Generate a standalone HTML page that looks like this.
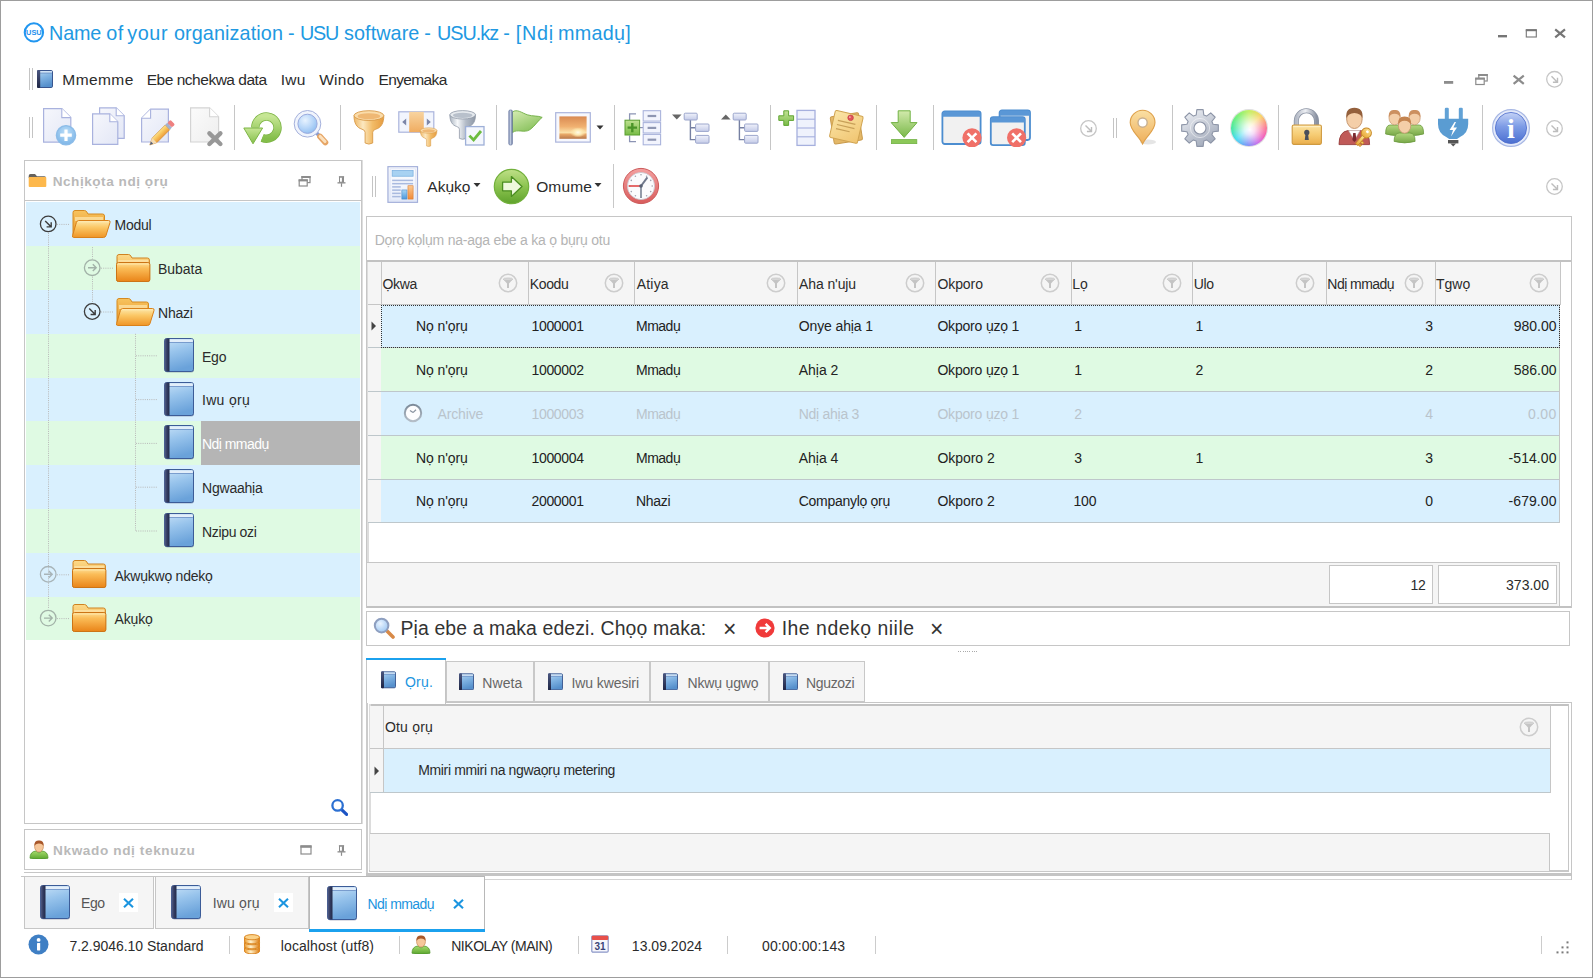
<!DOCTYPE html>
<html lang="ig"><head><meta charset="utf-8"><title>USU</title><style>
html,body{margin:0;padding:0;background:#fff}
body{width:1593px;height:978px;position:relative;overflow:hidden;font-family:"Liberation Sans",sans-serif}
div,svg{position:absolute;box-sizing:border-box}
.t{white-space:nowrap;line-height:1}
#win{left:0;top:0;width:1593px;height:978px;border:1px solid #9d9d9d}
</style></head><body>
<div id="win"></div>
<svg style="left:23px;top:21px" width="22" height="22" viewBox="0 0 22 22"><circle cx="10.9" cy="11.4" r="9.15" fill="#fff" stroke="#2196f0" stroke-width="2.1"/><text x="10.9" y="14.1" font-family="Liberation Sans,sans-serif" font-size="7.3" font-weight="bold" fill="#1e90ee" text-anchor="middle" textLength="15.6" lengthAdjust="spacingAndGlyphs">USU</text></svg>
<div class="t" style="left:0;top:24.24px;font-size:19.8px;color:#2199e2;"><span style="position:absolute;left:49.11px;top:0;letter-spacing:-0.235px">Name </span><span style="position:absolute;left:106.21px;top:0;letter-spacing:0.583px">of </span><span style="position:absolute;left:127.31px;top:0;letter-spacing:0.565px">your </span><span style="position:absolute;left:173.91px;top:0;letter-spacing:0.117px">organization </span><span style="position:absolute;left:288.01px;top:0;letter-spacing:1.184px">- </span><span style="position:absolute;left:300.11px;top:0;letter-spacing:-1.309px">USU </span><span style="position:absolute;left:344.01px;top:0;letter-spacing:0.081px">software </span><span style="position:absolute;left:424.31px;top:0;letter-spacing:1.184px">- </span><span style="position:absolute;left:437.01px;top:0;letter-spacing:-0.988px">USU.kz </span><span style="position:absolute;left:503.31px;top:0;letter-spacing:0.984px">- </span><span style="position:absolute;left:515.71px;top:0;letter-spacing:0.792px">[Ndị </span><span style="position:absolute;left:557.91px;top:0;letter-spacing:0.259px">mmadụ]</span></div>
<svg style="left:1494px;top:24px" width="76" height="18" viewBox="0 0 76 18"><rect x="4" y="11" width="9" height="2.4" fill="#767676"/><rect x="32.3" y="6" width="10" height="7" fill="none" stroke="#767676" stroke-width="1.1"/><rect x="31.8" y="5.2" width="11" height="2" fill="#767676"/><path d="M61.2 5.4 L71 13.4 M71 5.4 L61.2 13.4" stroke="#767676" stroke-width="2.2" fill="none"/></svg>
<svg style="left:28px;top:68px" width="8" height="22" viewBox="0 0 8 22"><rect x="1" y="0" width="1" height="22" fill="#c4c4c4"/><rect x="4" y="0" width="1" height="22" fill="#c4c4c4"/></svg>
<svg style="left:37px;top:70px" width="16" height="18" viewBox="0 0 16 18"><defs><linearGradient id="g1" x1="0" y1="0" x2="0.3" y2="1"><stop offset="0" stop-color="#b4d6f2"/><stop offset="0.5" stop-color="#7fb2e2"/><stop offset="1" stop-color="#5690cc"/></linearGradient><linearGradient id="g2" x1="0" y1="0" x2="0" y2="1"><stop offset="0" stop-color="#4a5680"/><stop offset="1" stop-color="#1e2544"/></linearGradient></defs><rect x="0.5" y="0.5" width="15" height="17" rx="1.3" fill="url(#g1)" stroke="#39558e" stroke-width="1"/><rect x="3" y="1.2" width="12" height="1.5" fill="#dbe9f8"/><rect x="3" y="2.7" width="12" height="0.8" fill="#6c8fc4"/><rect x="0" y="0" width="3.2" height="18" rx="1" fill="url(#g2)"/></svg>
<div class="t menu" style="left:62.35px;top:71.88px;font-size:15.5px;color:#2b2b2b;letter-spacing:0.419px;">Mmemme</div>
<div class="t menu" style="left:146.75px;top:71.88px;font-size:15.5px;color:#2b2b2b;letter-spacing:-0.483px;">Ebe nchekwa data</div>
<div class="t menu" style="left:280.65px;top:71.88px;font-size:15.5px;color:#2b2b2b;letter-spacing:0.295px;">Iwu</div>
<div class="t menu" style="left:319.25px;top:71.88px;font-size:15.5px;color:#2b2b2b;letter-spacing:0.234px;">Windo</div>
<div class="t menu" style="left:378.45px;top:71.88px;font-size:15.5px;color:#2b2b2b;letter-spacing:-0.616px;">Enyemaka</div>
<svg style="left:1440px;top:70px" width="125" height="20" viewBox="0 0 125 20"><rect x="4" y="11" width="9.2" height="2.8" fill="#8c8c8c"/><rect x="38.8" y="4.6" width="8.4" height="6.4" fill="none" stroke="#8c8c8c" stroke-width="1.2"/><rect x="38.2" y="4" width="9.6" height="2" fill="#8c8c8c"/><rect x="35.8" y="8.3" width="8.4" height="6.2" fill="#fff" stroke="#8c8c8c" stroke-width="1.2"/><rect x="35.2" y="7.7" width="9.6" height="2" fill="#8c8c8c"/><path d="M73.6 5.6 L83.8 13.8 M83.8 5.6 L73.6 13.8" stroke="#8c8c8c" stroke-width="2.2" fill="none"/><circle cx="114.5" cy="9.3" r="7.8" fill="none" stroke="#c6c6c6" stroke-width="1.3"/><path d="M111.5 6.300000000000001 L117.1 11.9 M117.5 7.700000000000001 L117.5 12.3 L112.9 12.3" stroke="#bdbdbd" stroke-width="1.4" fill="none"/></svg>
<svg style="left:28px;top:117px" width="8" height="21" viewBox="0 0 8 21"><rect x="1" y="0" width="1" height="21" fill="#c4c4c4"/><rect x="4" y="0" width="1" height="21" fill="#c4c4c4"/></svg>
<svg style="left:43px;top:108px" width="36" height="40" viewBox="0 0 36 40"><defs><linearGradient id="g4" x1="0" y1="0" x2="1" y2="1"><stop offset="0" stop-color="#f6f7fc"/><stop offset="1" stop-color="#e3e7f6"/></linearGradient></defs><path d="M0.6 0.6 H18.8 L27.8 9.6 V34.2 H0.6Z" fill="url(#g4)" stroke="#a9b2de" stroke-width="1.2"/><path d="M18.8 0.6 V9.6 H27.8" fill="#fff" stroke="#a9b2de" stroke-width="1.1"/><defs><radialGradient id="g3" cx="0.5" cy="0.35" r="0.7"><stop offset="0" stop-color="#bcdef8"/><stop offset="1" stop-color="#78b2e6"/></radialGradient></defs><circle cx="23" cy="27.2" r="9.6" fill="url(#g3)" stroke="#8cbce8" stroke-width="1.4"/><path d="M23 21.4 V33 M17.2 27.2 H28.8" stroke="#fff" stroke-width="3.2"/></svg>
<svg style="left:92px;top:107px" width="34" height="40" viewBox="0 0 34 40"><defs><linearGradient id="g5" x1="0" y1="0" x2="1" y2="1"><stop offset="0" stop-color="#f6f7fc"/><stop offset="1" stop-color="#e3e7f6"/></linearGradient></defs><path d="M7.6 0.8 H24.200000000000003 L32.2 8.8 V31.400000000000002 H7.6Z" fill="url(#g5)" stroke="#a9b2de" stroke-width="1.2"/><path d="M24.200000000000003 0.8 V8.8 H32.2" fill="#fff" stroke="#a9b2de" stroke-width="1.1"/><defs><linearGradient id="g6" x1="0" y1="0" x2="1" y2="1"><stop offset="0" stop-color="#f6f7fc"/><stop offset="1" stop-color="#e3e7f6"/></linearGradient></defs><path d="M0.6 6.8 H17.8 L25.8 14.8 V37.4 H0.6Z" fill="url(#g6)" stroke="#a9b2de" stroke-width="1.2"/><path d="M17.8 6.8 V14.8 H25.8" fill="#fff" stroke="#a9b2de" stroke-width="1.1"/></svg>
<svg style="left:141px;top:108px" width="36" height="40" viewBox="0 0 36 40"><defs><linearGradient id="g8" x1="0" y1="0" x2="1" y2="1"><stop offset="0" stop-color="#f6f7fc"/><stop offset="1" stop-color="#e3e7f6"/></linearGradient></defs><path d="M9.6 1.2 H27.400000000000002 V34.0 H0.6 V10.2Z" fill="url(#g8)" stroke="#a9b2de" stroke-width="1.2"/><path d="M9.6 1.2 V10.2 H0.6" fill="#fff" stroke="#a9b2de" stroke-width="1.1"/><defs><linearGradient id="g7" x1="0" y1="0" x2="0" y2="1"><stop offset="0" stop-color="#fce08a"/><stop offset="0.45" stop-color="#f8c45c"/><stop offset="1" stop-color="#ec9c3c"/></linearGradient></defs><g transform="translate(8.8,37) rotate(-45)"><path d="M0 0 L6.6 -3.3 H25 V3.3 H6.6Z" fill="url(#g7)" stroke="#d0903c" stroke-width=".6"/><path d="M6.6 -3.3 L0 0 L6.6 3.3Z" fill="#f4dcb4"/><path d="M0 0 L3.2 -1.6 V1.6Z" fill="#56607a"/><rect x="25" y="-3.3" width="3" height="6.6" fill="#a4b0cc"/><rect x="28" y="-3.3" width="4.4" height="6.6" rx="1.4" fill="#ee8080"/></g></svg>
<svg style="left:190px;top:107px" width="36" height="42" viewBox="0 0 36 42"><defs><linearGradient id="g9" x1="0" y1="0" x2="1" y2="1"><stop offset="0" stop-color="#fbfbfb"/><stop offset="1" stop-color="#eeeeee"/></linearGradient></defs><path d="M0.6 0.8 H19.6 L28.6 9.8 V35.0 H0.6Z" fill="url(#g9)" stroke="#d4d4d4" stroke-width="1.2"/><path d="M19.6 0.8 V9.8 H28.6" fill="#fff" stroke="#d4d4d4" stroke-width="1.1"/><path d="M19.4 26.4 L30.4 37 M30.4 26.4 L19.4 37" stroke="#989898" stroke-width="4.4" stroke-linecap="round"/></svg>
<svg style="left:243px;top:111px" width="40" height="36" viewBox="0 0 40 36"><defs><linearGradient id="g10" x1="0" y1="0" x2="0" y2="1"><stop offset="0" stop-color="#c6e694"/><stop offset="1" stop-color="#84be4a"/></linearGradient></defs><path d="M12.30 16.60 A11.1 11.1 0 1 1 19.24 26.89" fill="none" stroke="#7cb444" stroke-width="8.4"/><path d="M12.30 16.60 A11.1 11.1 0 1 1 19.24 26.89" fill="none" stroke="url(#g10)" stroke-width="6.8"/><path d="M0.8 17 H19.6 L10 32.8Z" fill="url(#g10)" stroke="#7cb444" stroke-width="1"/></svg>
<svg style="left:293px;top:108px" width="38" height="40" viewBox="0 0 38 40"><defs><radialGradient id="g11" cx="0.38" cy="0.32" r="0.8"><stop offset="0" stop-color="#e8f3ff"/><stop offset="0.55" stop-color="#b4d4f8"/><stop offset="1" stop-color="#86b8ee"/></radialGradient></defs><path d="M22.6 24 L27 28.6" stroke="#8c9ccc" stroke-width="3.6"/><path d="M27 28.6 L32.4 34.4" stroke="#e6a464" stroke-width="5.8" stroke-linecap="round"/><path d="M27.2 28.4 L32 33.6" stroke="#fbe0bc" stroke-width="3" stroke-linecap="round"/><circle cx="14.5" cy="15.8" r="13.3" fill="#f0f4fc" stroke="#a4b0dc" stroke-width="1"/><circle cx="14.5" cy="15.8" r="9.6" fill="url(#g11)" stroke="#9aaade" stroke-width="1"/></svg>
<svg style="left:353px;top:110px" width="34" height="36" viewBox="0 0 34 36"><defs><linearGradient id="g12" x1="0" y1="0" x2="1" y2="0"><stop offset="0" stop-color="#eeb664"/><stop offset="0.3" stop-color="#fce8c0"/><stop offset="0.62" stop-color="#f2bc68"/><stop offset="1" stop-color="#e69c40"/></linearGradient></defs><g transform="scale(1.0)"><path d="M1 5.5 C1 13 3.5 17.6 9 19.2 Q12.1 20 12.1 22.4 V33 Q15.9 35.2 19.7 33 V22.4 Q19.7 20 22.8 19.2 C28.3 17.6 30.8 13 30.8 5.5Z" fill="url(#g12)" stroke="#d89a48" stroke-width=".9"/><ellipse cx="15.9" cy="5.6" rx="14.9" ry="4.9" fill="#fadcaa" stroke="#d89a48" stroke-width=".9"/><ellipse cx="15.9" cy="6.2" rx="11.4" ry="3" fill="#eaa85c" opacity=".7"/></g></svg>
<svg style="left:397.8px;top:110.5px" width="44" height="36" viewBox="0 0 44 36"><defs><linearGradient id="g13" x1="0" y1="0" x2="0" y2="1"><stop offset="0" stop-color="#f8d4a0"/><stop offset="1" stop-color="#f0ac60"/></linearGradient></defs><rect x="0.8" y="0.8" width="35" height="20.4" fill="#f2f5fd" stroke="#aab4dc" stroke-width="1.2"/><rect x="11.2" y="0.8" width="14.6" height="20.4" fill="url(#g13)"/><path d="M8.2 7.4 V14.6 L4.2 11Z M28.8 7.4 V14.6 L32.8 11Z" fill="#7c86a8"/><g transform="translate(21.7,16.4)"><defs><linearGradient id="g14" x1="0" y1="0" x2="1" y2="0"><stop offset="0" stop-color="#eeb664"/><stop offset="0.3" stop-color="#fce8c0"/><stop offset="0.62" stop-color="#f2bc68"/><stop offset="1" stop-color="#e69c40"/></linearGradient></defs><g transform="scale(0.56)"><path d="M1 5.5 C1 13 3.5 17.6 9 19.2 Q12.1 20 12.1 22.4 V33 Q15.9 35.2 19.7 33 V22.4 Q19.7 20 22.8 19.2 C28.3 17.6 30.8 13 30.8 5.5Z" fill="url(#g14)" stroke="#d89a48" stroke-width=".9"/><ellipse cx="15.9" cy="5.6" rx="14.9" ry="4.9" fill="#fadcaa" stroke="#d89a48" stroke-width=".9"/><ellipse cx="15.9" cy="6.2" rx="11.4" ry="3" fill="#eaa85c" opacity=".7"/></g></g></svg>
<svg style="left:449px;top:110px" width="38" height="38" viewBox="0 0 38 38"><defs><linearGradient id="g15" x1="0" y1="0" x2="1" y2="0"><stop offset="0" stop-color="#aab4c0"/><stop offset="0.3" stop-color="#f6f8fa"/><stop offset="0.62" stop-color="#b4bcc8"/><stop offset="1" stop-color="#8e98a6"/></linearGradient></defs><g transform="scale(0.86)"><path d="M1 5.5 C1 13 3.5 17.6 9 19.2 Q12.1 20 12.1 22.4 V33 Q15.9 35.2 19.7 33 V22.4 Q19.7 20 22.8 19.2 C28.3 17.6 30.8 13 30.8 5.5Z" fill="url(#g15)" stroke="#8e98a6" stroke-width=".9"/><ellipse cx="15.9" cy="5.6" rx="14.9" ry="4.9" fill="#e6eaee" stroke="#8e98a6" stroke-width=".9"/><ellipse cx="15.9" cy="6.2" rx="11.4" ry="3" fill="#a4aebc" opacity=".7"/></g><rect x="16.6" y="16.6" width="18.4" height="18.4" fill="#f4f7fd" stroke="#9eb0d8" stroke-width="1.3"/><path d="M20.4 25.6 L24.6 30 L32 21" fill="none" stroke="#6cbc40" stroke-width="2.8"/></svg>
<svg style="left:507px;top:109px" width="38" height="38" viewBox="0 0 38 38"><defs><linearGradient id="g16" x1="0" y1="0" x2="0.6" y2="1"><stop offset="0" stop-color="#d6ecb2"/><stop offset="1" stop-color="#86c05a"/></linearGradient><linearGradient id="g17" x1="0" y1="0" x2="1" y2="0"><stop offset="0" stop-color="#8090b4"/><stop offset="0.45" stop-color="#c4cee2"/><stop offset="1" stop-color="#66769e"/></linearGradient></defs><path d="M5.4 3 C10 -0.4 15 4 20.4 5.8 C26 7.6 30.4 6.4 35.2 8.4 C31.4 11 28.4 16.6 23 20.6 C17 24.6 10.6 19.4 5.4 23.6Z" fill="url(#g16)" stroke="#6fae44" stroke-width=".9"/><rect x="1.8" y="1" width="3.6" height="35" rx="1.4" fill="url(#g17)" stroke="#6a7aa2" stroke-width=".7"/></svg>
<svg style="left:555px;top:112px" width="37" height="32" viewBox="0 0 37 32"><defs><linearGradient id="g18" x1="0" y1="0" x2="0" y2="1"><stop offset="0" stop-color="#d98a52"/><stop offset="0.45" stop-color="#f0b070"/><stop offset="0.72" stop-color="#fbe0a8"/><stop offset="0.8" stop-color="#e8a868"/><stop offset="1" stop-color="#b8784a"/></linearGradient><radialGradient id="g19" cx="0.5" cy="0.5" r="0.5"><stop offset="0" stop-color="#fffbe8"/><stop offset="0.5" stop-color="#fde8b0"/><stop offset="1" stop-color="#fde8b000"/></radialGradient></defs><rect x="0.7" y="0.7" width="34.6" height="29.4" fill="#f7f8fd" stroke="#aab4dc" stroke-width="1.2"/><rect x="4.4" y="4.4" width="27.2" height="22.4" fill="url(#g18)"/><ellipse cx="23" cy="20.4" rx="8" ry="5" fill="url(#g19)"/></svg>
<svg style="left:596px;top:125px" width="8" height="6" viewBox="0 0 8 6"><path d="M0.5 0.6 H7.5 L4 4.6Z" fill="#333"/></svg>
<svg style="left:624px;top:110px" width="39" height="37" viewBox="0 0 39 37"><defs><linearGradient id="g20" x1="0" y1="0" x2="0" y2="1"><stop offset="0" stop-color="#bee090"/><stop offset="1" stop-color="#78bc46"/></linearGradient></defs><path d="M12 3.8 H5.6 V10 M5.6 25.6 V31.6 H12" fill="none" stroke="#8c94b4" stroke-width="1.3"/><path d="M12 17.6 H19" fill="none" stroke="#8c94b4" stroke-width="1.2"/><rect x="1" y="10.2" width="14.6" height="14.8" fill="url(#g20)" stroke="#5a9e30" stroke-width="1"/><path d="M8.3 13 V22.2 M3.6 17.6 H13" stroke="#4a9428" stroke-width="2.4"/><rect x="19.2" y="0.7" width="17.4" height="10.4" fill="#f2f4fd" stroke="#aab4dc" stroke-width="1.1"/><rect x="23.6" y="4.9" width="8.6" height="2.2" fill="#8e96b2"/><rect x="19.2" y="12.6" width="17.4" height="10.4" fill="#f2f4fd" stroke="#aab4dc" stroke-width="1.1"/><rect x="23.6" y="16.8" width="8.6" height="2.2" fill="#8e96b2"/><rect x="19.2" y="24.4" width="17.4" height="10.4" fill="#f2f4fd" stroke="#aab4dc" stroke-width="1.1"/><rect x="23.6" y="28.599999999999998" width="8.6" height="2.2" fill="#8e96b2"/></svg>
<svg style="left:671px;top:112px" width="40" height="34" viewBox="0 0 40 34"><defs><linearGradient id="g21" x1="0" y1="0" x2="0" y2="1"><stop offset="0" stop-color="#f0f2fb"/><stop offset="1" stop-color="#c4cbe8"/></linearGradient></defs><path d="M1 2.6 H10.6 L5.8 7.6Z" fill="#666"/><path d="M19.4 8 V27.6 H25 M19.4 15.8 H25" fill="none" stroke="#7680a2" stroke-width="1.4"/><rect x="13.2" y="1.2" width="13" height="6.8" rx="1" fill="url(#g21)" stroke="#9ca6cc" stroke-width="1"/><rect x="24.6" y="12" width="13.4" height="7.4" rx="1" fill="url(#g21)" stroke="#9ca6cc" stroke-width="1"/><rect x="24.6" y="23.4" width="13.4" height="7.8" rx="1" fill="url(#g21)" stroke="#9ca6cc" stroke-width="1"/></svg>
<svg style="left:719.6px;top:112px" width="40" height="34" viewBox="0 0 40 34"><defs><linearGradient id="g22" x1="0" y1="0" x2="0" y2="1"><stop offset="0" stop-color="#f0f2fb"/><stop offset="1" stop-color="#c4cbe8"/></linearGradient></defs><path d="M1 7.6 H10.6 L5.8 2.6Z" fill="#666"/><path d="M19.4 8 V27.6 H25 M19.4 15.8 H25" fill="none" stroke="#7680a2" stroke-width="1.4"/><rect x="13.2" y="1.2" width="13" height="6.8" rx="1" fill="url(#g22)" stroke="#9ca6cc" stroke-width="1"/><rect x="24.6" y="12" width="13.4" height="7.4" rx="1" fill="url(#g22)" stroke="#9ca6cc" stroke-width="1"/><rect x="24.6" y="23.4" width="13.4" height="7.8" rx="1" fill="url(#g22)" stroke="#9ca6cc" stroke-width="1"/></svg>
<svg style="left:778px;top:109px" width="39" height="38" viewBox="0 0 39 38"><defs><linearGradient id="g23" x1="0" y1="0" x2="0" y2="1"><stop offset="0" stop-color="#c2e294"/><stop offset="1" stop-color="#7abc48"/></linearGradient></defs><path d="M5.8 1.8 H10.6 V6.8 H15.6 V11.4 H10.6 V16.4 H5.8 V11.4 H0.8 V6.8 H5.8Z" fill="url(#g23)" stroke="#62a634" stroke-width="1"/><rect x="19" y="1.4" width="18" height="35" fill="#eff2fc" stroke="#a6b0de" stroke-width="1.3"/><path d="M19 10.2 H37" stroke="#a6b0de" stroke-width="1.1"/><path d="M19 19 H37" stroke="#a6b0de" stroke-width="1.1"/><path d="M19 27.8 H37" stroke="#a6b0de" stroke-width="1.1"/></svg>
<svg style="left:828px;top:109px" width="38" height="37" viewBox="0 0 38 37"><defs><linearGradient id="g24" x1="0" y1="0" x2="1" y2="1"><stop offset="0" stop-color="#fbe6a8"/><stop offset="1" stop-color="#f0c470"/></linearGradient></defs><g transform="rotate(-9 18 19)"><rect x="4" y="5.6" width="28.6" height="27.6" rx="1.5" fill="#e4b868" stroke="#c89a4c" stroke-width="1"/></g><g transform="rotate(13 18 18)"><rect x="4" y="4" width="28.6" height="27.6" rx="1.5" fill="url(#g24)" stroke="#d0a452" stroke-width="1"/><path d="M8.6 13.4 H26.6 M8.6 17.6 H26.6 M8.6 21.8 H22.6" stroke="#c8a058" stroke-width="1.2"/></g><circle cx="22.6" cy="8.8" r="2.8" fill="#e2545a" stroke="#b83840" stroke-width=".6"/><circle cx="21.9" cy="8.1" r=".9" fill="#f8b4b4"/></svg>
<svg style="left:890px;top:110px" width="29" height="36" viewBox="0 0 29 36"><defs><linearGradient id="g25" x1="0" y1="0" x2="0" y2="1"><stop offset="0" stop-color="#d2eaac"/><stop offset="1" stop-color="#7ab84a"/></linearGradient></defs><path d="M8.2 0.8 H20.2 V12.6 H27 L14.2 27.4 L1.2 12.6 H8.2Z" fill="url(#g25)" stroke="#72b244" stroke-width="1"/><rect x="1.4" y="29.6" width="25.4" height="4" fill="#8cc858" stroke="#72b244" stroke-width=".8"/></svg>
<svg style="left:941px;top:108.5px" width="42" height="38" viewBox="0 0 42 38"><rect x="1.4" y="2.4" width="38.2" height="32.6" rx="2.4" fill="#f1f1f1" stroke="#4c8dd0" stroke-width="1.8"/><path d="M1.4 7.800000000000001 V4.8 Q1.4 2.4 3.8 2.4 H37.2 Q39.6 2.4 39.6 4.8 V7.800000000000001Z" fill="#5a97d6"/><circle cx="31" cy="28.8" r="9.6" fill="#f07068"/><path d="M26.6 24.4 L35.4 33.2 M35.4 24.4 L26.6 33.2" stroke="#fff" stroke-width="2.6"/></svg>
<svg style="left:989px;top:108.5px" width="43" height="38" viewBox="0 0 43 38"><rect x="10.6" y="1.4" width="30.4" height="29.6" rx="2.4" fill="#f1f1f1" stroke="#4c8dd0" stroke-width="1.8"/><path d="M10.6 6.800000000000001 V3.8 Q10.6 1.4 13.0 1.4 H38.6 Q41.0 1.4 41.0 3.8 V6.800000000000001Z" fill="#5a97d6"/><rect x="1.8" y="8.2" width="34" height="28" rx="2.4" fill="#f1f1f1" stroke="#4c8dd0" stroke-width="1.8"/><path d="M1.8 13.6 V10.6 Q1.8 8.2 4.2 8.2 H33.4 Q35.8 8.2 35.8 10.6 V13.6Z" fill="#5a97d6"/><circle cx="27.6" cy="28.8" r="9.6" fill="#f07068"/><path d="M23.200000000000003 24.4 L32.0 33.2 M32.0 24.4 L23.200000000000003 33.2" stroke="#fff" stroke-width="2.6"/></svg>
<svg style="left:1079px;top:118.5px" width="19" height="19" viewBox="0 0 19 19"><circle cx="9.5" cy="9.5" r="7.8" fill="none" stroke="#c6c6c6" stroke-width="1.3"/><path d="M6.5 6.5 L12.1 12.1 M12.5 7.9 L12.5 12.5 L7.9 12.5" stroke="#bdbdbd" stroke-width="1.4" fill="none"/></svg>
<svg style="left:1112px;top:118px" width="8" height="20" viewBox="0 0 8 20"><rect x="1" y="0" width="1" height="20" fill="#c4c4c4"/><rect x="4" y="0" width="1" height="20" fill="#c4c4c4"/></svg>
<svg style="left:1128px;top:109px" width="31" height="38" viewBox="0 0 31 38"><defs><linearGradient id="g26" x1="0" y1="0" x2="0" y2="1"><stop offset="0" stop-color="#fae0a4"/><stop offset="1" stop-color="#eeae5a"/></linearGradient></defs><ellipse cx="20" cy="33" rx="8" ry="2.4" fill="#000" opacity=".10"/><path d="M14.6 35 C11 27 2.2 22 2.2 13.6 A12.4 12.4 0 0 1 27 13.6 C27 22 18.2 27 14.6 35Z" fill="url(#g26)" stroke="#dea04a" stroke-width="1.1"/><circle cx="14.6" cy="13.6" r="4.6" fill="#fff" stroke="#c8b090" stroke-width="1.4"/></svg>
<svg style="left:1180px;top:107.6px" width="40" height="40" viewBox="0 0 40 40"><defs><linearGradient id="g27" x1="0" y1="0" x2="0.6" y2="1"><stop offset="0" stop-color="#f2f4f8"/><stop offset="1" stop-color="#a4acbc"/></linearGradient></defs><path d="M38.33 16.85 L38.33 23.15 L33.07 23.76 L31.90 26.58 L35.19 30.74 L30.74 35.19 L26.58 31.90 L23.76 33.07 L23.15 38.33 L16.85 38.33 L16.24 33.07 L13.42 31.90 L9.26 35.19 L4.81 30.74 L8.10 26.58 L6.93 23.76 L1.67 23.15 L1.67 16.85 L6.93 16.24 L8.10 13.42 L4.81 9.26 L9.26 4.81 L13.42 8.10 L16.24 6.93 L16.85 1.67 L23.15 1.67 L23.76 6.93 L26.58 8.10 L30.74 4.81 L35.19 9.26 L31.90 13.42 L33.07 16.24Z" fill="url(#g27)" stroke="#8e96a8" stroke-width="1.1" stroke-linejoin="round"/><circle cx="20" cy="20" r="6" fill="#fff" stroke="#8e96a8" stroke-width="1.1"/><circle cx="20" cy="20" r="9.6" fill="none" stroke="#fff" stroke-width="1" opacity=".5"/></svg>
<svg style="left:1491px;top:107.6px" width="40" height="40" viewBox="0 0 40 40"><defs><linearGradient id="g28" x1="0" y1="0" x2="0" y2="1"><stop offset="0" stop-color="#c4d2f6"/><stop offset="0.45" stop-color="#7e9ce6"/><stop offset="1" stop-color="#4a6ed0"/></linearGradient></defs><circle cx="20" cy="20" r="18.4" fill="#e4eafa" stroke="#a8b8e4" stroke-width="1.2"/><circle cx="20" cy="20" r="15.6" fill="url(#g28)" stroke="#4c6ccc" stroke-width=".8"/><text x="20" y="30" font-family="Liberation Serif,serif" font-size="28" font-weight="bold" fill="#fff" text-anchor="middle">i</text></svg>
<svg style="left:1290px;top:108px" width="34" height="39" viewBox="0 0 34 39"><defs><linearGradient id="g29" x1="0" y1="0" x2="0" y2="1"><stop offset="0" stop-color="#fbe2a0"/><stop offset="0.5" stop-color="#f6cc74"/><stop offset="1" stop-color="#eaae4c"/></linearGradient><linearGradient id="g30" x1="0" y1="0" x2="1" y2="0"><stop offset="0" stop-color="#b4bac6"/><stop offset="0.45" stop-color="#eef0f4"/><stop offset="1" stop-color="#8a92a2"/></linearGradient></defs><path d="M6.3 19 V12.8 A10.1 10.1 0 0 1 26.5 12.8 V19" fill="none" stroke="#8a92a2" stroke-width="5"/><path d="M6.3 19 V12.8 A10.1 10.1 0 0 1 26.5 12.8 V19" fill="none" stroke="url(#g30)" stroke-width="3.4"/><rect x="2.2" y="17" width="29.2" height="19.4" rx="1.6" fill="url(#g29)" stroke="#cf9a40" stroke-width="1.1"/><rect x="3.2" y="18" width="27.2" height="1.2" fill="#fff4d0" opacity=".7"/><circle cx="16.8" cy="24.4" r="2.6" fill="#4a4e5a"/><path d="M15.6 25 H18 L18.8 32 H14.8Z" fill="#4a4e5a"/></svg>
<svg style="left:1338px;top:106.5px" width="40" height="40" viewBox="0 0 40 40"><defs><linearGradient id="g31" x1="0" y1="0" x2="0" y2="1"><stop offset="0" stop-color="#fbe090"/><stop offset="1" stop-color="#e8a838"/></linearGradient></defs><path d="M1 37.6 Q1 24.6 10 23.6 H22.6 Q31.6 24.6 31.6 37.6Z" fill="#c05a58" stroke="#98403e" stroke-width=".9"/><path d="M10.6 23.6 L16.4 33 L22 23.6Z" fill="#fff" stroke="#c8c8c8" stroke-width=".6"/><path d="M15.2 26 H17.6 L18.4 33 L16.4 35 L14.4 33Z" fill="#7a2a30"/><g transform="translate(16.4,12) scale(1.25)"><ellipse cx="0" cy="0" rx="6.2" ry="7.6" fill="#f4cea8" stroke="#c89870" stroke-width=".8"/><path d="M-6.4 -0.6 Q-7.4 -9 0 -9 Q7.4 -9 6.4 -0.6 Q5 -4.6 0 -4.8 Q-5 -4.6 -6.4 -0.6Z" fill="#94603c"/></g><g transform="translate(28.4,26) rotate(40)"><circle cx="0" cy="0" r="5" fill="url(#g31)" stroke="#c88a28" stroke-width="1"/><circle cx="0" cy="-1.6" r="1.4" fill="#fff"/><path d="M-1.6 4.6 H1.6 V15 H-1.6Z M1.6 9 H4.4 V11 H1.6Z M1.6 12.4 H4 V14.4 H1.6Z" fill="url(#g31)" stroke="#c88a28" stroke-width=".8"/></g></svg>
<svg style="left:1385px;top:109.5px" width="40" height="36" viewBox="0 0 40 36"><defs><linearGradient id="g32" x1="0" y1="0" x2="0" y2="1"><stop offset="0" stop-color="#b4d880"/><stop offset="1" stop-color="#78a848"/></linearGradient></defs><path d="M0.5999999999999996 24 Q0.5999999999999996 15 5.1 15 H14.1 Q18.6 15 18.6 24 Q9.6 27 0.5999999999999996 24Z" fill="url(#g32)" stroke="#6c9a40" stroke-width=".8"/><g transform="translate(9.6,8) scale(0.9)"><ellipse cx="0" cy="0" rx="6.2" ry="7.6" fill="#f4cea8" stroke="#c89870" stroke-width=".8"/><path d="M-6.4 -0.6 Q-7.4 -9 0 -9 Q7.4 -9 6.4 -0.6 Q5 -4.6 0 -4.8 Q-5 -4.6 -6.4 -0.6Z" fill="#cc9060"/></g><path d="M20.6 24 Q20.6 15 25.1 15 H34.1 Q38.6 15 38.6 24 Q29.6 27 20.6 24Z" fill="url(#g32)" stroke="#6c9a40" stroke-width=".8"/><g transform="translate(29.6,8) scale(0.9)"><ellipse cx="0" cy="0" rx="6.2" ry="7.6" fill="#f4cea8" stroke="#c89870" stroke-width=".8"/><path d="M-6.4 -0.6 Q-7.4 -9 0 -9 Q7.4 -9 6.4 -0.6 Q5 -4.6 0 -4.8 Q-5 -4.6 -6.4 -0.6Z" fill="#cc9060"/></g><path d="M9.100000000000001 31.4 Q9.100000000000001 23 14.350000000000001 23 H24.85 Q30.1 23 30.1 31.4 Q19.6 34.4 9.100000000000001 31.4Z" fill="url(#g32)" stroke="#6c9a40" stroke-width=".8"/><g transform="translate(19.6,15.6) scale(1.0)"><ellipse cx="0" cy="0" rx="6.2" ry="7.6" fill="#f4cea8" stroke="#c89870" stroke-width=".8"/><path d="M-6.4 -0.6 Q-7.4 -9 0 -9 Q7.4 -9 6.4 -0.6 Q5 -4.6 0 -4.8 Q-5 -4.6 -6.4 -0.6Z" fill="#c48450"/></g></svg>
<svg style="left:1437px;top:107px" width="33" height="41" viewBox="0 0 33 41"><rect x="7.8" y="0.8" width="4" height="13" rx="1.2" fill="#62a2d6"/><rect x="21.8" y="0.8" width="4" height="13" rx="1.2" fill="#62a2d6"/><path d="M1 11.8 H31.2 V17 Q31.2 26 23 30 L20 32 H12.2 L9.2 30 Q1 26 1 17Z" fill="#5a9cd2"/><path d="M17.6 15 L12.6 23 H16 L14 29.6 L20 20.6 H16.4 L19 15Z" fill="#fff"/><rect x="11" y="33" width="10.4" height="3.4" fill="#555"/><path d="M13.4 36.4 H19 L16.2 39.6Z" fill="#555"/></svg>
<svg style="left:1545px;top:118.5px" width="19" height="19" viewBox="0 0 19 19"><circle cx="9.5" cy="9.5" r="7.8" fill="none" stroke="#c6c6c6" stroke-width="1.3"/><path d="M6.5 6.5 L12.1 12.1 M12.5 7.9 L12.5 12.5 L7.9 12.5" stroke="#bdbdbd" stroke-width="1.4" fill="none"/></svg>
<div style="left:234px;top:105px;width:1px;height:45px;background:#c6c6c6"></div>
<div style="left:340px;top:105px;width:1px;height:45px;background:#c6c6c6"></div>
<div style="left:496px;top:105px;width:1px;height:45px;background:#c6c6c6"></div>
<div style="left:614px;top:105px;width:1px;height:45px;background:#c6c6c6"></div>
<div style="left:770px;top:105px;width:1px;height:45px;background:#c6c6c6"></div>
<div style="left:876px;top:105px;width:1px;height:45px;background:#c6c6c6"></div>
<div style="left:933px;top:105px;width:1px;height:45px;background:#c6c6c6"></div>
<div style="left:1172px;top:105px;width:1px;height:45px;background:#c6c6c6"></div>
<div style="left:1278px;top:105px;width:1px;height:45px;background:#c6c6c6"></div>
<div style="left:1482px;top:105px;width:1px;height:45px;background:#c6c6c6"></div>
<div style="left:1231.4px;top:109.6px;width:36px;height:36px;border-radius:50%;background:radial-gradient(circle at 52% 54%,#fff 0%,rgba(255,255,255,.8) 20%,rgba(255,255,255,0) 66%),conic-gradient(from 0deg,#c4f068,#f8d468 45deg,#fa6c8c 90deg,#f04cb0 120deg,#c05ce8 150deg,#6c84f6 185deg,#3cd8f0 228deg,#48e8a0 270deg,#7cf07c 315deg,#c4f068 360deg);box-shadow:0 0 0 1px rgba(160,160,160,.35)"></div>
<div style="left:24px;top:160px;width:338px;height:664px;border:1px solid #c6c6c6;background:#fff"></div>
<div style="left:25px;top:200px;width:336px;height:1px;background:#c6c6c6"></div>
<div style="left:362px;top:160px;width:1px;height:664px;background:#dedede"></div>
<svg style="left:28px;top:173px" width="19" height="15" viewBox="0 0 19 15"><path d="M0.7 3 Q0.7 1 2.5 1 H7 L9 3.2 H16.5 Q18 3.2 18 4.7 V5 H0.7Z" fill="#66625c"/><rect x="0.7" y="4" width="17.6" height="10" rx="1" fill="#fdb84c"/></svg>
<div class="t" style="left:52.65px;top:175.29px;font-size:13.6px;color:#b9b9b9;letter-spacing:0.525px;font-weight:bold">Nchịkọta ndị ọrụ</div>
<svg style="left:298px;top:174px" width="50" height="14" viewBox="0 0 50 14"><rect x="4" y="2.6" width="8" height="6" fill="none" stroke="#8c8c8c" stroke-width="1.2"/><rect x="3.4" y="2" width="9.2" height="2" fill="#8c8c8c"/><rect x="1.2" y="6" width="8" height="6" fill="#fff" stroke="#8c8c8c" stroke-width="1.2"/><rect x="0.6" y="5.4" width="9.2" height="2" fill="#8c8c8c"/><g transform="translate(39.5,2.2)"><rect x="1.4" y="0" width="5.2" height="1.2" fill="#8c8c8c"/><rect x="2" y="1" width="4" height="5" fill="#fff" stroke="#8c8c8c" stroke-width="1"/><rect x="4.4" y="1" width="1.6" height="5" fill="#8c8c8c"/><rect x="0" y="6" width="8" height="1.3" fill="#8c8c8c"/><rect x="3.4" y="7" width="1.2" height="3.6" fill="#8c8c8c"/></g></svg>
<div style="left:26px;top:202px;width:334px;height:44px;background:#d9f0fe"></div>
<svg style="left:71px;top:209px" width="40" height="30" viewBox="0 0 40 30"><defs><linearGradient id="g33" x1="0" y1="0" x2="0" y2="1"><stop offset="0" stop-color="#fde9ae"/><stop offset="0.4" stop-color="#fbc866"/><stop offset="1" stop-color="#ef9526"/></linearGradient><linearGradient id="g34" x1="0" y1="0" x2="0" y2="1"><stop offset="0" stop-color="#f7c35e"/><stop offset="1" stop-color="#e8952a"/></linearGradient></defs><path d="M2 27.5 V3.5 Q2 1.5 4 1.5 H13.5 Q15 1.5 15.8 3 L17 5 H31.5 Q33.5 5 33.5 7 V27.5Z" fill="url(#g34)" stroke="#d58a20" stroke-width="1"/><path d="M4 8 H32 V12 H4Z" fill="#fde8b0" opacity=".7"/><path d="M7.5 11.5 H37.5 Q39.6 11.5 39 13.5 L35 26.5 Q34.4 28.5 32.4 28.5 H2.6 Q1 28.5 1.6 26.5 L5.4 13.5 Q6 11.5 7.5 11.5Z" fill="url(#g33)" stroke="#d9811a" stroke-width="1"/><path d="M7.8 12.8 H37.6" stroke="#fff0c0" stroke-width="1" opacity=".6"/></svg>
<div class="t" style="left:114.53px;top:218.15px;font-size:14px;color:#2b2b2b;letter-spacing:-0.239px;">Modul</div>
<div style="left:26px;top:246px;width:334px;height:44px;background:#dffae3"></div>
<svg style="left:115px;top:253px" width="40" height="30" viewBox="0 0 40 30"><defs><linearGradient id="g35" x1="0" y1="0" x2="0" y2="1"><stop offset="0" stop-color="#fddf98"/><stop offset="0.3" stop-color="#fbbd58"/><stop offset="1" stop-color="#e98418"/></linearGradient><linearGradient id="g36" x1="0" y1="0" x2="0" y2="1"><stop offset="0" stop-color="#fcd988"/><stop offset="1" stop-color="#f2a63c"/></linearGradient></defs><path d="M2 28 V3.5 Q2 1.5 4 1.5 H13.5 Q15 1.5 15.8 3 L17 5 H32.4 Q34.4 5 34.4 7 V28Z" fill="url(#g36)" stroke="#cf8220" stroke-width="1"/><rect x="3.2" y="7" width="30" height="3" fill="#fde6ae" opacity=".7"/><rect x="1.5" y="9.5" width="33.4" height="19" rx="2" fill="url(#g35)" stroke="#cc7416" stroke-width="1"/><rect x="2.5" y="10.5" width="31.4" height="1.2" fill="#fff0b8" opacity=".5"/></svg>
<div class="t" style="left:158.03px;top:261.95px;font-size:14px;color:#2b2b2b;letter-spacing:-0.022px;">Bubata</div>
<div style="left:26px;top:290px;width:334px;height:44px;background:#d9f0fe"></div>
<svg style="left:115px;top:297px" width="40" height="30" viewBox="0 0 40 30"><defs><linearGradient id="g37" x1="0" y1="0" x2="0" y2="1"><stop offset="0" stop-color="#fde9ae"/><stop offset="0.4" stop-color="#fbc866"/><stop offset="1" stop-color="#ef9526"/></linearGradient><linearGradient id="g38" x1="0" y1="0" x2="0" y2="1"><stop offset="0" stop-color="#f7c35e"/><stop offset="1" stop-color="#e8952a"/></linearGradient></defs><path d="M2 27.5 V3.5 Q2 1.5 4 1.5 H13.5 Q15 1.5 15.8 3 L17 5 H31.5 Q33.5 5 33.5 7 V27.5Z" fill="url(#g38)" stroke="#d58a20" stroke-width="1"/><path d="M4 8 H32 V12 H4Z" fill="#fde8b0" opacity=".7"/><path d="M7.5 11.5 H37.5 Q39.6 11.5 39 13.5 L35 26.5 Q34.4 28.5 32.4 28.5 H2.6 Q1 28.5 1.6 26.5 L5.4 13.5 Q6 11.5 7.5 11.5Z" fill="url(#g37)" stroke="#d9811a" stroke-width="1"/><path d="M7.8 12.8 H37.6" stroke="#fff0c0" stroke-width="1" opacity=".6"/></svg>
<div class="t" style="left:158.03px;top:305.75px;font-size:14px;color:#2b2b2b;letter-spacing:-0.231px;">Nhazi</div>
<div style="left:26px;top:334px;width:334px;height:44px;background:#dffae3"></div>
<svg style="left:163.6px;top:338px" width="32" height="36" viewBox="0 0 32 36"><defs><linearGradient id="g39" x1="0" y1="0" x2="0.25" y2="1"><stop offset="0" stop-color="#c8e2f8"/><stop offset="0.45" stop-color="#98c4ec"/><stop offset="1" stop-color="#6aa2da"/></linearGradient><linearGradient id="g40" x1="0" y1="0" x2="1" y2="0"><stop offset="0" stop-color="#56618a"/><stop offset="0.5" stop-color="#333c62"/><stop offset="1" stop-color="#232a48"/></linearGradient></defs><rect x="1" y="1.5" width="29" height="33" rx="2.5" fill="#33406a" opacity=".35"/><rect x="0.5" y="0.5" width="29" height="33" rx="2.2" fill="url(#g39)" stroke="#3c5c98" stroke-width="1"/><rect x="4" y="1.4" width="24.8" height="2.6" fill="#e8f1fb" opacity=".9"/><rect x="4" y="4" width="24.8" height="1" fill="#6c8fc4" opacity=".8"/><path d="M0.5 2.5 Q0.5 0.5 2.5 0.5 H5.5 V33.5 H2.5 Q0.5 33.5 0.5 31.5Z" fill="url(#g40)"/></svg>
<div class="t" style="left:202.03px;top:349.55px;font-size:14px;color:#2b2b2b;letter-spacing:-0.257px;">Ego</div>
<div style="left:26px;top:378px;width:334px;height:43px;background:#d9f0fe"></div>
<svg style="left:163.6px;top:382px" width="32" height="36" viewBox="0 0 32 36"><defs><linearGradient id="g41" x1="0" y1="0" x2="0.25" y2="1"><stop offset="0" stop-color="#c8e2f8"/><stop offset="0.45" stop-color="#98c4ec"/><stop offset="1" stop-color="#6aa2da"/></linearGradient><linearGradient id="g42" x1="0" y1="0" x2="1" y2="0"><stop offset="0" stop-color="#56618a"/><stop offset="0.5" stop-color="#333c62"/><stop offset="1" stop-color="#232a48"/></linearGradient></defs><rect x="1" y="1.5" width="29" height="33" rx="2.5" fill="#33406a" opacity=".35"/><rect x="0.5" y="0.5" width="29" height="33" rx="2.2" fill="url(#g41)" stroke="#3c5c98" stroke-width="1"/><rect x="4" y="1.4" width="24.8" height="2.6" fill="#e8f1fb" opacity=".9"/><rect x="4" y="4" width="24.8" height="1" fill="#6c8fc4" opacity=".8"/><path d="M0.5 2.5 Q0.5 0.5 2.5 0.5 H5.5 V33.5 H2.5 Q0.5 33.5 0.5 31.5Z" fill="url(#g42)"/></svg>
<div class="t" style="left:202.03px;top:393.35px;font-size:14px;color:#2b2b2b;letter-spacing:0.304px;">Iwu ọrụ</div>
<div style="left:26px;top:421px;width:334px;height:44px;background:#dffae3"></div>
<svg style="left:163.6px;top:425px" width="32" height="36" viewBox="0 0 32 36"><defs><linearGradient id="g43" x1="0" y1="0" x2="0.25" y2="1"><stop offset="0" stop-color="#c8e2f8"/><stop offset="0.45" stop-color="#98c4ec"/><stop offset="1" stop-color="#6aa2da"/></linearGradient><linearGradient id="g44" x1="0" y1="0" x2="1" y2="0"><stop offset="0" stop-color="#56618a"/><stop offset="0.5" stop-color="#333c62"/><stop offset="1" stop-color="#232a48"/></linearGradient></defs><rect x="1" y="1.5" width="29" height="33" rx="2.5" fill="#33406a" opacity=".35"/><rect x="0.5" y="0.5" width="29" height="33" rx="2.2" fill="url(#g43)" stroke="#3c5c98" stroke-width="1"/><rect x="4" y="1.4" width="24.8" height="2.6" fill="#e8f1fb" opacity=".9"/><rect x="4" y="4" width="24.8" height="1" fill="#6c8fc4" opacity=".8"/><path d="M0.5 2.5 Q0.5 0.5 2.5 0.5 H5.5 V33.5 H2.5 Q0.5 33.5 0.5 31.5Z" fill="url(#g44)"/></svg>
<div style="left:201px;top:421px;width:159px;height:44px;background:#b5b5b5"></div>
<div class="t" style="left:202.03px;top:437.15px;font-size:14px;color:#fff;letter-spacing:-0.549px;">Ndị mmadụ</div>
<div style="left:26px;top:465px;width:334px;height:44px;background:#d9f0fe"></div>
<svg style="left:163.6px;top:469px" width="32" height="36" viewBox="0 0 32 36"><defs><linearGradient id="g45" x1="0" y1="0" x2="0.25" y2="1"><stop offset="0" stop-color="#c8e2f8"/><stop offset="0.45" stop-color="#98c4ec"/><stop offset="1" stop-color="#6aa2da"/></linearGradient><linearGradient id="g46" x1="0" y1="0" x2="1" y2="0"><stop offset="0" stop-color="#56618a"/><stop offset="0.5" stop-color="#333c62"/><stop offset="1" stop-color="#232a48"/></linearGradient></defs><rect x="1" y="1.5" width="29" height="33" rx="2.5" fill="#33406a" opacity=".35"/><rect x="0.5" y="0.5" width="29" height="33" rx="2.2" fill="url(#g45)" stroke="#3c5c98" stroke-width="1"/><rect x="4" y="1.4" width="24.8" height="2.6" fill="#e8f1fb" opacity=".9"/><rect x="4" y="4" width="24.8" height="1" fill="#6c8fc4" opacity=".8"/><path d="M0.5 2.5 Q0.5 0.5 2.5 0.5 H5.5 V33.5 H2.5 Q0.5 33.5 0.5 31.5Z" fill="url(#g46)"/></svg>
<div class="t" style="left:202.03px;top:480.95px;font-size:14px;color:#2b2b2b;letter-spacing:-0.215px;">Ngwaahịa</div>
<div style="left:26px;top:509px;width:334px;height:44px;background:#dffae3"></div>
<svg style="left:163.6px;top:513px" width="32" height="36" viewBox="0 0 32 36"><defs><linearGradient id="g47" x1="0" y1="0" x2="0.25" y2="1"><stop offset="0" stop-color="#c8e2f8"/><stop offset="0.45" stop-color="#98c4ec"/><stop offset="1" stop-color="#6aa2da"/></linearGradient><linearGradient id="g48" x1="0" y1="0" x2="1" y2="0"><stop offset="0" stop-color="#56618a"/><stop offset="0.5" stop-color="#333c62"/><stop offset="1" stop-color="#232a48"/></linearGradient></defs><rect x="1" y="1.5" width="29" height="33" rx="2.5" fill="#33406a" opacity=".35"/><rect x="0.5" y="0.5" width="29" height="33" rx="2.2" fill="url(#g47)" stroke="#3c5c98" stroke-width="1"/><rect x="4" y="1.4" width="24.8" height="2.6" fill="#e8f1fb" opacity=".9"/><rect x="4" y="4" width="24.8" height="1" fill="#6c8fc4" opacity=".8"/><path d="M0.5 2.5 Q0.5 0.5 2.5 0.5 H5.5 V33.5 H2.5 Q0.5 33.5 0.5 31.5Z" fill="url(#g48)"/></svg>
<div class="t" style="left:202.03px;top:524.75px;font-size:14px;color:#2b2b2b;letter-spacing:-0.349px;">Nzipu ozi</div>
<div style="left:26px;top:553px;width:334px;height:44px;background:#d9f0fe"></div>
<svg style="left:71px;top:559px" width="40" height="30" viewBox="0 0 40 30"><defs><linearGradient id="g49" x1="0" y1="0" x2="0" y2="1"><stop offset="0" stop-color="#fddf98"/><stop offset="0.3" stop-color="#fbbd58"/><stop offset="1" stop-color="#e98418"/></linearGradient><linearGradient id="g50" x1="0" y1="0" x2="0" y2="1"><stop offset="0" stop-color="#fcd988"/><stop offset="1" stop-color="#f2a63c"/></linearGradient></defs><path d="M2 28 V3.5 Q2 1.5 4 1.5 H13.5 Q15 1.5 15.8 3 L17 5 H32.4 Q34.4 5 34.4 7 V28Z" fill="url(#g50)" stroke="#cf8220" stroke-width="1"/><rect x="3.2" y="7" width="30" height="3" fill="#fde6ae" opacity=".7"/><rect x="1.5" y="9.5" width="33.4" height="19" rx="2" fill="url(#g49)" stroke="#cc7416" stroke-width="1"/><rect x="2.5" y="10.5" width="31.4" height="1.2" fill="#fff0b8" opacity=".5"/></svg>
<div class="t" style="left:114.53px;top:568.55px;font-size:14px;color:#2b2b2b;letter-spacing:-0.241px;">Akwụkwọ ndekọ</div>
<div style="left:26px;top:597px;width:334px;height:43px;background:#dffae3"></div>
<svg style="left:71px;top:603px" width="40" height="30" viewBox="0 0 40 30"><defs><linearGradient id="g51" x1="0" y1="0" x2="0" y2="1"><stop offset="0" stop-color="#fddf98"/><stop offset="0.3" stop-color="#fbbd58"/><stop offset="1" stop-color="#e98418"/></linearGradient><linearGradient id="g52" x1="0" y1="0" x2="0" y2="1"><stop offset="0" stop-color="#fcd988"/><stop offset="1" stop-color="#f2a63c"/></linearGradient></defs><path d="M2 28 V3.5 Q2 1.5 4 1.5 H13.5 Q15 1.5 15.8 3 L17 5 H32.4 Q34.4 5 34.4 7 V28Z" fill="url(#g52)" stroke="#cf8220" stroke-width="1"/><rect x="3.2" y="7" width="30" height="3" fill="#fde6ae" opacity=".7"/><rect x="1.5" y="9.5" width="33.4" height="19" rx="2" fill="url(#g51)" stroke="#cc7416" stroke-width="1"/><rect x="2.5" y="10.5" width="31.4" height="1.2" fill="#fff0b8" opacity=".5"/></svg>
<div class="t" style="left:114.53px;top:612.35px;font-size:14px;color:#2b2b2b;letter-spacing:-0.134px;">Akụkọ</div>
<svg style="left:0;top:0" width="400" height="700" viewBox="0 0 400 700"><g stroke="#b8b8b8" stroke-width="1" stroke-dasharray="1 1.2" fill="none"><path d="M48.5 232.9 V609.1"/><path d="M57 224.4 H70"/><path d="M57 574.8 H70"/><path d="M57 618.6 H70"/><path d="M92.5 247.2 V258.7 M92.5 276.7 V302.5"/><path d="M101 268.2 H113"/><path d="M101 312.0 H113"/><path d="M135.5 333.79999999999995 V530.5"/><path d="M136 355.79999999999995 H158"/><path d="M136 399.6 H158"/><path d="M136 443.4 H158"/><path d="M136 487.19999999999993 H158"/><path d="M136 531.0 H158"/></g><circle cx="48.2" cy="223.9" r="7.8" fill="none" stroke="#3c3c3c" stroke-width="1.3"/><path d="M45.2 220.9 L50.800000000000004 226.5 M51.2 222.3 L51.2 226.9 L46.6 226.9" stroke="#3c3c3c" stroke-width="1.4" fill="none"/><circle cx="92.2" cy="311.5" r="7.8" fill="none" stroke="#3c3c3c" stroke-width="1.3"/><path d="M89.2 308.5 L94.8 314.1 M95.2 309.9 L95.2 314.5 L90.60000000000001 314.5" stroke="#3c3c3c" stroke-width="1.4" fill="none"/><circle cx="92.2" cy="267.7" r="7.8" fill="none" stroke="#a2b2a8" stroke-width="1.3"/><path d="M88.0 267.7 L95.8 267.7 M92.8 264.3 L96.2 267.7 L92.8 271.09999999999997" stroke="#a2b2a8" stroke-width="1.4" fill="none"/><circle cx="48.2" cy="574.3" r="7.8" fill="none" stroke="#a8b4b8" stroke-width="1.3"/><path d="M44.0 574.3 L51.800000000000004 574.3 M48.800000000000004 570.9 L52.2 574.3 L48.800000000000004 577.6999999999999" stroke="#a8b4b8" stroke-width="1.4" fill="none"/><circle cx="48.2" cy="618.1" r="7.8" fill="none" stroke="#a2b2a8" stroke-width="1.3"/><path d="M44.0 618.1 L51.800000000000004 618.1 M48.800000000000004 614.7 L52.2 618.1 L48.800000000000004 621.5" stroke="#a2b2a8" stroke-width="1.4" fill="none"/></svg>
<svg style="left:330px;top:798px" width="18" height="18" viewBox="0 0 18 18"><path d="M11.6 11.6 L16.6 16.4" stroke="#1c54c4" stroke-width="3.2" stroke-linecap="round"/><circle cx="7.6" cy="7.4" r="5.2" fill="#fff" stroke="#2c70d2" stroke-width="2.3"/></svg>
<div style="left:24px;top:829px;width:338px;height:41px;border:1px solid #c6c6c6;background:#fff"></div>
<div style="left:24px;top:872px;width:338px;height:1px;background:#c6c6c6"></div>
<svg style="left:29px;top:839px" width="20" height="20" viewBox="0 0 20 20"><defs><linearGradient id="g53" x1="0" y1="0" x2="0" y2="1"><stop offset="0" stop-color="#a6dc6c"/><stop offset="1" stop-color="#5aa52e"/></linearGradient></defs><path d="M1 19.2 Q1 12.5 7 12 L10 14 L13 12 Q19 12.5 19 19.2 Q10 21 1 19.2Z" fill="url(#g53)" stroke="#4f962a" stroke-width=".8"/><ellipse cx="10" cy="7.6" rx="4.4" ry="5.4" fill="#f6c79a" stroke="#c98a55" stroke-width=".7"/><path d="M5.4 7 Q5 1.6 10 1.6 Q15 1.6 14.6 7 Q13.5 4.4 10 4.4 Q6.5 4.4 5.4 7Z" fill="#a8572a"/></svg>
<div class="t" style="left:53.05px;top:843.79px;font-size:13.6px;color:#b9b9b9;letter-spacing:0.612px;font-weight:bold">Nkwado ndị teknuzu</div>
<svg style="left:298px;top:843px" width="50" height="14" viewBox="0 0 50 14"><rect x="3" y="3" width="10" height="8" fill="none" stroke="#8c8c8c" stroke-width="1.2"/><rect x="2.4" y="2.4" width="11.2" height="2.4" fill="#8c8c8c"/><g transform="translate(39.5,2.2)"><rect x="1.4" y="0" width="5.2" height="1.2" fill="#8c8c8c"/><rect x="2" y="1" width="4" height="5" fill="#fff" stroke="#8c8c8c" stroke-width="1"/><rect x="4.4" y="1" width="1.6" height="5" fill="#8c8c8c"/><rect x="0" y="6" width="8" height="1.3" fill="#8c8c8c"/><rect x="3.4" y="7" width="1.2" height="3.6" fill="#8c8c8c"/></g></svg>
<div style="left:21px;top:876px;width:289px;height:1px;background:#c6c6c6"></div>
<div style="left:485px;top:879px;width:1087px;height:1px;background:#d4d4d4"></div>
<div style="left:1571px;top:874px;width:1px;height:6px;background:#c6c6c6"></div>
<div style="left:24px;top:877px;width:130px;height:52px;background:#f5f5f5;border:1px solid #c6c6c6;border-top:none;box-sizing:border-box"></div>
<div style="left:155px;top:877px;width:154px;height:52px;background:#f5f5f5;border:1px solid #c6c6c6;border-top:none;box-sizing:border-box"></div>
<div style="left:309px;top:876px;width:176px;height:53px;background:#fff;border:1px solid #b8b8b8;border-bottom:none;box-sizing:border-box"></div>
<div style="left:309px;top:929px;width:176px;height:3px;background:#1ba1ee"></div>
<svg style="left:40.2px;top:885.2px" width="32" height="36" viewBox="0 0 32 36"><defs><linearGradient id="g54" x1="0" y1="0" x2="0.25" y2="1"><stop offset="0" stop-color="#c8e2f8"/><stop offset="0.45" stop-color="#98c4ec"/><stop offset="1" stop-color="#6aa2da"/></linearGradient><linearGradient id="g55" x1="0" y1="0" x2="1" y2="0"><stop offset="0" stop-color="#56618a"/><stop offset="0.5" stop-color="#333c62"/><stop offset="1" stop-color="#232a48"/></linearGradient></defs><rect x="1" y="1.5" width="29" height="33" rx="2.5" fill="#33406a" opacity=".35"/><rect x="0.5" y="0.5" width="29" height="33" rx="2.2" fill="url(#g54)" stroke="#3c5c98" stroke-width="1"/><rect x="4" y="1.4" width="24.8" height="2.6" fill="#e8f1fb" opacity=".9"/><rect x="4" y="4" width="24.8" height="1" fill="#6c8fc4" opacity=".8"/><path d="M0.5 2.5 Q0.5 0.5 2.5 0.5 H5.5 V33.5 H2.5 Q0.5 33.5 0.5 31.5Z" fill="url(#g55)"/></svg>
<div class="t" style="left:80.93px;top:895.65px;font-size:14px;color:#555;letter-spacing:-0.357px;">Ego</div>
<div style="left:118.5px;top:893px;width:19px;height:19px;background:#fff"></div>
<svg style="left:123px;top:898px" width="11" height="10" viewBox="0 0 11 10"><path d="M1 0.8 L10 9.2 M10 0.8 L1 9.2" stroke="#1b95e0" stroke-width="2.1" fill="none"/></svg>
<svg style="left:171.4px;top:885.2px" width="32" height="36" viewBox="0 0 32 36"><defs><linearGradient id="g56" x1="0" y1="0" x2="0.25" y2="1"><stop offset="0" stop-color="#c8e2f8"/><stop offset="0.45" stop-color="#98c4ec"/><stop offset="1" stop-color="#6aa2da"/></linearGradient><linearGradient id="g57" x1="0" y1="0" x2="1" y2="0"><stop offset="0" stop-color="#56618a"/><stop offset="0.5" stop-color="#333c62"/><stop offset="1" stop-color="#232a48"/></linearGradient></defs><rect x="1" y="1.5" width="29" height="33" rx="2.5" fill="#33406a" opacity=".35"/><rect x="0.5" y="0.5" width="29" height="33" rx="2.2" fill="url(#g56)" stroke="#3c5c98" stroke-width="1"/><rect x="4" y="1.4" width="24.8" height="2.6" fill="#e8f1fb" opacity=".9"/><rect x="4" y="4" width="24.8" height="1" fill="#6c8fc4" opacity=".8"/><path d="M0.5 2.5 Q0.5 0.5 2.5 0.5 H5.5 V33.5 H2.5 Q0.5 33.5 0.5 31.5Z" fill="url(#g57)"/></svg>
<div class="t" style="left:212.73px;top:895.65px;font-size:14px;color:#555;letter-spacing:0.161px;">Iwu ọrụ</div>
<div style="left:273.5px;top:893px;width:19px;height:19px;background:#fff"></div>
<svg style="left:278px;top:898px" width="11" height="10" viewBox="0 0 11 10"><path d="M1 0.8 L10 9.2 M10 0.8 L1 9.2" stroke="#1b95e0" stroke-width="2.1" fill="none"/></svg>
<svg style="left:326.6px;top:886.4px" width="32" height="36" viewBox="0 0 32 36"><defs><linearGradient id="g58" x1="0" y1="0" x2="0.25" y2="1"><stop offset="0" stop-color="#c8e2f8"/><stop offset="0.45" stop-color="#98c4ec"/><stop offset="1" stop-color="#6aa2da"/></linearGradient><linearGradient id="g59" x1="0" y1="0" x2="1" y2="0"><stop offset="0" stop-color="#56618a"/><stop offset="0.5" stop-color="#333c62"/><stop offset="1" stop-color="#232a48"/></linearGradient></defs><rect x="1" y="1.5" width="29" height="33" rx="2.5" fill="#33406a" opacity=".35"/><rect x="0.5" y="0.5" width="29" height="33" rx="2.2" fill="url(#g58)" stroke="#3c5c98" stroke-width="1"/><rect x="4" y="1.4" width="24.8" height="2.6" fill="#e8f1fb" opacity=".9"/><rect x="4" y="4" width="24.8" height="1" fill="#6c8fc4" opacity=".8"/><path d="M0.5 2.5 Q0.5 0.5 2.5 0.5 H5.5 V33.5 H2.5 Q0.5 33.5 0.5 31.5Z" fill="url(#g59)"/></svg>
<div class="t" style="left:367.53px;top:896.95px;font-size:14px;color:#1b95e0;letter-spacing:-0.571px;">Ndị mmadụ</div>
<svg style="left:453px;top:898.5px" width="11" height="10" viewBox="0 0 11 10"><path d="M1 0.8 L10 9.2 M10 0.8 L1 9.2" stroke="#1b95e0" stroke-width="2.1" fill="none"/></svg>
<svg style="left:28px;top:934px" width="21" height="21" viewBox="0 0 21 21"><circle cx="10.5" cy="10.5" r="10" fill="#3f7fc4"/><rect x="9" y="9" width="3.2" height="7.4" rx=".6" fill="#fff"/><circle cx="10.6" cy="5.9" r="1.9" fill="#fff"/></svg>
<div class="t" style="left:69.43px;top:938.85px;font-size:14px;color:#2b2b2b;letter-spacing:-0.027px;">7.2.9046.10 Standard</div>
<div style="left:229px;top:936px;width:1px;height:18px;background:#ccc"></div>
<div style="left:399px;top:936px;width:1px;height:18px;background:#ccc"></div>
<div style="left:578px;top:936px;width:1px;height:18px;background:#ccc"></div>
<div style="left:727px;top:936px;width:1px;height:18px;background:#ccc"></div>
<div style="left:875px;top:936px;width:1px;height:18px;background:#ccc"></div>
<div style="left:1541px;top:936px;width:1px;height:18px;background:#ccc"></div>
<svg style="left:243px;top:934px" width="18" height="20" viewBox="0 0 18 20"><defs><linearGradient id="g60" x1="0" y1="0" x2="1" y2="0"><stop offset="0" stop-color="#ec9a2c"/><stop offset="0.42" stop-color="#fff2cc"/><stop offset="1" stop-color="#de7e12"/></linearGradient></defs><path d="M1.5 13.2 V17.2 A7.5 2.6 0 0 0 16.5 17.2 V13.2 Z" fill="url(#g60)" stroke="#d8801a" stroke-width=".9"/><ellipse cx="9" cy="13.2" rx="7.5" ry="2.6" fill="#fbd288" stroke="#d8801a" stroke-width=".9"/><path d="M1.5 8.2 V12.2 A7.5 2.6 0 0 0 16.5 12.2 V8.2 Z" fill="url(#g60)" stroke="#d8801a" stroke-width=".9"/><ellipse cx="9" cy="8.2" rx="7.5" ry="2.6" fill="#fbd288" stroke="#d8801a" stroke-width=".9"/><path d="M1.5 3.2 V7.2 A7.5 2.6 0 0 0 16.5 7.2 V3.2 Z" fill="url(#g60)" stroke="#d8801a" stroke-width=".9"/><ellipse cx="9" cy="3.2" rx="7.5" ry="2.6" fill="#fbd288" stroke="#d8801a" stroke-width=".9"/></svg>
<div class="t" style="left:280.83px;top:938.85px;font-size:14px;color:#2b2b2b;letter-spacing:0.089px;">localhost (utf8)</div>
<svg style="left:411px;top:934px" width="21" height="20" viewBox="0 0 21 20"><defs><linearGradient id="g61" x1="0" y1="0" x2="0" y2="1"><stop offset="0" stop-color="#a6dc6c"/><stop offset="1" stop-color="#5aa52e"/></linearGradient></defs><path d="M1 19.2 Q1 12.5 7 12 L10 14 L13 12 Q19 12.5 19 19.2 Q10 21 1 19.2Z" fill="url(#g61)" stroke="#4f962a" stroke-width=".8"/><ellipse cx="10" cy="7.6" rx="4.4" ry="5.4" fill="#f6c79a" stroke="#c98a55" stroke-width=".7"/><path d="M5.4 7 Q5 1.6 10 1.6 Q15 1.6 14.6 7 Q13.5 4.4 10 4.4 Q6.5 4.4 5.4 7Z" fill="#a8572a"/></svg>
<div class="t" style="left:451.23px;top:938.85px;font-size:14px;color:#2b2b2b;letter-spacing:-0.47px;">NIKOLAY (MAIN)</div>
<svg style="left:591px;top:935px" width="18" height="18" viewBox="0 0 18 18"><rect x="0.8" y="0.8" width="16.4" height="16.4" rx="1.2" fill="#f6f7fc" stroke="#8a96c8" stroke-width="1.2"/><rect x="0.8" y="0.8" width="16.4" height="4.2" rx="1" fill="#e8504a"/><text x="9" y="15" font-family="Liberation Sans,sans-serif" font-size="10" font-weight="bold" fill="#3a4478" text-anchor="middle">31</text></svg>
<div class="t" style="left:631.83px;top:938.85px;font-size:14px;color:#2b2b2b;letter-spacing:0.017px;">13.09.2024</div>
<div class="t" style="left:762.03px;top:938.85px;font-size:14px;color:#2b2b2b;letter-spacing:0.125px;">00:00:00:143</div>
<svg style="left:1555px;top:940px" width="16" height="16" viewBox="0 0 16 16"><rect x="11.5" y="1.4" width="2" height="2" fill="#7a7a7a"/><rect x="6.5" y="6.4" width="2" height="2" fill="#7a7a7a"/><rect x="11.5" y="6.4" width="2" height="2" fill="#7a7a7a"/><rect x="1.5" y="11.4" width="2" height="2" fill="#7a7a7a"/><rect x="6.5" y="11.4" width="2" height="2" fill="#7a7a7a"/><rect x="11.5" y="11.4" width="2" height="2" fill="#7a7a7a"/></svg>
<svg style="left:371px;top:176px" width="8" height="21" viewBox="0 0 8 21"><rect x="1" y="0" width="1" height="21" fill="#c4c4c4"/><rect x="4" y="0" width="1" height="21" fill="#c4c4c4"/></svg>
<svg style="left:387px;top:165.4px" width="32.4" height="39.6" viewBox="0 0 34 40"><defs><linearGradient id="g62" x1="0" y1="0" x2="0" y2="1"><stop offset="0" stop-color="#fff"/><stop offset="1" stop-color="#e6ecfa"/></linearGradient><linearGradient id="g63" x1="0" y1="0" x2="0" y2="1"><stop offset="0" stop-color="#a4d4f4"/><stop offset="1" stop-color="#4c98dc"/></linearGradient><linearGradient id="g64" x1="0" y1="0" x2="0" y2="1"><stop offset="0" stop-color="#fbc890"/><stop offset="1" stop-color="#f08a38"/></linearGradient></defs><rect x="1" y="1" width="31" height="37.4" fill="url(#g62)" stroke="#a4b0da" stroke-width="1.3"/><rect x="3.2" y="3.2" width="26.6" height="33" fill="none" stroke="#dfe5f6" stroke-width="1"/><rect x="5.4" y="5" width="22" height="6" fill="#a8d2f2" stroke="#7ab0e0" stroke-width=".8"/><rect x="5.4" y="14.6" width="22" height="1.6" fill="#a9badf"/><rect x="5.4" y="18" width="22" height="1.6" fill="#a9badf"/><rect x="5.4" y="21.4" width="9" height="1.6" fill="#a9badf"/><rect x="5.4" y="24.8" width="9" height="1.6" fill="#a9badf"/><rect x="5.4" y="28.2" width="9" height="1.6" fill="#a9badf"/><rect x="5.4" y="31.6" width="9" height="1.6" fill="#a9badf"/><rect x="15.6" y="25.4" width="5.4" height="9.6" fill="url(#g63)" stroke="#4a88c8" stroke-width=".6"/><rect x="22" y="21" width="5.4" height="14" fill="url(#g64)" stroke="#d87a30" stroke-width=".6"/></svg>
<div class="t menu" style="left:427.35px;top:179.08px;font-size:15.5px;color:#2b2b2b;letter-spacing:-0.015px;">Akụkọ</div>
<svg style="left:473px;top:182px" width="8" height="6" viewBox="0 0 8 6"><path d="M0.5 1 H7.5 L4 5Z" fill="#333"/></svg>
<svg style="left:493px;top:168px" width="37" height="37" viewBox="0 0 37 37"><defs><linearGradient id="g65" x1="0" y1="0" x2="0" y2="1"><stop offset="0" stop-color="#bfe088"/><stop offset="0.5" stop-color="#8cc450"/><stop offset="1" stop-color="#5fa22c"/></linearGradient></defs><circle cx="18.5" cy="18.5" r="17.2" fill="url(#g65)" stroke="#72b03c" stroke-width="1.2"/><path d="M9.6 14.2 H18.4 V8.6 L29 18.5 L18.4 28.4 V22.8 H9.6Z" fill="#eef8dc" stroke="#4c8e22" stroke-width="1.3" stroke-linejoin="round"/></svg>
<div class="t menu" style="left:536.15px;top:179.08px;font-size:15.5px;color:#2b2b2b;letter-spacing:0.157px;">Omume</div>
<svg style="left:594px;top:182px" width="8" height="6" viewBox="0 0 8 6"><path d="M0.5 1 H7.5 L4 5Z" fill="#333"/></svg>
<div style="left:613px;top:164px;width:1px;height:44px;background:#c8c8c8"></div>
<svg style="left:622px;top:167px" width="38" height="38" viewBox="0 0 38 38"><defs><linearGradient id="g66" x1="0" y1="0" x2="0" y2="1"><stop offset="0" stop-color="#f4a0a0"/><stop offset="1" stop-color="#d85c5c"/></linearGradient></defs><circle cx="19" cy="19" r="17.6" fill="url(#g66)" stroke="#cc5a5a" stroke-width="1"/><circle cx="19" cy="19" r="13.6" fill="#fbfbfd" stroke="#c8c8d0" stroke-width=".8"/><circle cx="30.20" cy="19.00" r=".8" fill="#a0a4b0"/><circle cx="28.70" cy="24.60" r=".8" fill="#a0a4b0"/><circle cx="24.60" cy="28.70" r=".8" fill="#a0a4b0"/><circle cx="19.00" cy="30.20" r=".8" fill="#a0a4b0"/><circle cx="13.40" cy="28.70" r=".8" fill="#a0a4b0"/><circle cx="9.30" cy="24.60" r=".8" fill="#a0a4b0"/><circle cx="7.80" cy="19.00" r=".8" fill="#a0a4b0"/><circle cx="9.30" cy="13.40" r=".8" fill="#a0a4b0"/><circle cx="13.40" cy="9.30" r=".8" fill="#a0a4b0"/><circle cx="19.00" cy="7.80" r=".8" fill="#a0a4b0"/><circle cx="24.60" cy="9.30" r=".8" fill="#a0a4b0"/><circle cx="28.70" cy="13.40" r=".8" fill="#a0a4b0"/><path d="M19 19 L25.4 10.4" stroke="#70788c" stroke-width="2"/><path d="M19 19 V31" stroke="#8890a0" stroke-width="1.8"/><path d="M19 19 H6.6" stroke="#e04848" stroke-width="1.6"/><circle cx="19" cy="19" r="1.8" fill="#586074"/></svg>
<svg style="left:1545px;top:177px" width="19" height="19" viewBox="0 0 19 19"><circle cx="9.5" cy="9.5" r="7.8" fill="none" stroke="#c6c6c6" stroke-width="1.3"/><path d="M6.5 6.5 L12.1 12.1 M12.5 7.9 L12.5 12.5 L7.9 12.5" stroke="#bdbdbd" stroke-width="1.4" fill="none"/></svg>
<div style="left:366px;top:216px;width:1206px;height:392px;border:1px solid #c6c6c6;background:#fff"></div>
<div class="t" style="left:374.63px;top:233.15px;font-size:14px;color:#b4b4b4;letter-spacing:-0.223px;">Dọrọ kọlụm na-aga ebe a ka ọ bụrụ otu</div>
<div style="left:367px;top:260px;width:1204px;height:2px;background:#c2c2c2"></div>
<div style="left:367px;top:262px;width:2px;height:345px;background:#dcdcdc"></div>
<div style="left:368px;top:262px;width:1191.5px;height:42.5px;background:#f5f5f5"></div>
<div style="left:380.5px;top:262px;width:1px;height:260.5px;background:#c6c6c6"></div>
<div style="left:528px;top:262px;width:1px;height:42.5px;background:#c6c6c6"></div>
<div class="t" style="left:382.43px;top:276.75px;font-size:14px;color:#2b2b2b;letter-spacing:-0.287px;">Ọkwa</div>
<svg style="left:498.2px;top:273.2px" width="20" height="20" viewBox="0 0 20 20"><circle cx="10" cy="10" r="8.7" fill="none" stroke="#cdcdcd" stroke-width="1.5"/><path d="M5.2 6.2 H14.8 L11 10.6 V15 H9 V10.6Z" fill="#c4c4c4"/><ellipse cx="10" cy="6.2" rx="4.8" ry="1.3" fill="#d8d8d8" stroke="#c0c0c0" stroke-width=".6"/></svg>
<div style="left:634px;top:262px;width:1px;height:42.5px;background:#c6c6c6"></div>
<div class="t" style="left:529.73px;top:276.75px;font-size:14px;color:#2b2b2b;letter-spacing:-0.349px;">Koodu</div>
<svg style="left:604.2px;top:273.2px" width="20" height="20" viewBox="0 0 20 20"><circle cx="10" cy="10" r="8.7" fill="none" stroke="#cdcdcd" stroke-width="1.5"/><path d="M5.2 6.2 H14.8 L11 10.6 V15 H9 V10.6Z" fill="#c4c4c4"/><ellipse cx="10" cy="6.2" rx="4.8" ry="1.3" fill="#d8d8d8" stroke="#c0c0c0" stroke-width=".6"/></svg>
<div style="left:797px;top:262px;width:1px;height:42.5px;background:#c6c6c6"></div>
<div class="t" style="left:636.63px;top:276.75px;font-size:14px;color:#2b2b2b;letter-spacing:0.223px;">Atiya</div>
<svg style="left:766.2px;top:273.2px" width="20" height="20" viewBox="0 0 20 20"><circle cx="10" cy="10" r="8.7" fill="none" stroke="#cdcdcd" stroke-width="1.5"/><path d="M5.2 6.2 H14.8 L11 10.6 V15 H9 V10.6Z" fill="#c4c4c4"/><ellipse cx="10" cy="6.2" rx="4.8" ry="1.3" fill="#d8d8d8" stroke="#c0c0c0" stroke-width=".6"/></svg>
<div style="left:935px;top:262px;width:1px;height:42.5px;background:#c6c6c6"></div>
<div class="t" style="left:799.03px;top:276.75px;font-size:14px;color:#2b2b2b;letter-spacing:-0.1px;">Aha n'uju</div>
<svg style="left:905.2px;top:273.2px" width="20" height="20" viewBox="0 0 20 20"><circle cx="10" cy="10" r="8.7" fill="none" stroke="#cdcdcd" stroke-width="1.5"/><path d="M5.2 6.2 H14.8 L11 10.6 V15 H9 V10.6Z" fill="#c4c4c4"/><ellipse cx="10" cy="6.2" rx="4.8" ry="1.3" fill="#d8d8d8" stroke="#c0c0c0" stroke-width=".6"/></svg>
<div style="left:1071px;top:262px;width:1px;height:42.5px;background:#c6c6c6"></div>
<div class="t" style="left:937.43px;top:276.75px;font-size:14px;color:#2b2b2b;letter-spacing:-0.079px;">Okporo</div>
<svg style="left:1040.2px;top:273.2px" width="20" height="20" viewBox="0 0 20 20"><circle cx="10" cy="10" r="8.7" fill="none" stroke="#cdcdcd" stroke-width="1.5"/><path d="M5.2 6.2 H14.8 L11 10.6 V15 H9 V10.6Z" fill="#c4c4c4"/><ellipse cx="10" cy="6.2" rx="4.8" ry="1.3" fill="#d8d8d8" stroke="#c0c0c0" stroke-width=".6"/></svg>
<div style="left:1192px;top:262px;width:1px;height:42.5px;background:#c6c6c6"></div>
<div class="t" style="left:1072.13px;top:276.75px;font-size:14px;color:#2b2b2b;letter-spacing:-0.016px;">Lọ</div>
<svg style="left:1162.2px;top:273.2px" width="20" height="20" viewBox="0 0 20 20"><circle cx="10" cy="10" r="8.7" fill="none" stroke="#cdcdcd" stroke-width="1.5"/><path d="M5.2 6.2 H14.8 L11 10.6 V15 H9 V10.6Z" fill="#c4c4c4"/><ellipse cx="10" cy="6.2" rx="4.8" ry="1.3" fill="#d8d8d8" stroke="#c0c0c0" stroke-width=".6"/></svg>
<div style="left:1326px;top:262px;width:1px;height:42.5px;background:#c6c6c6"></div>
<div class="t" style="left:1193.83px;top:276.75px;font-size:14px;color:#2b2b2b;letter-spacing:-0.423px;">Ulo</div>
<svg style="left:1295.2px;top:273.2px" width="20" height="20" viewBox="0 0 20 20"><circle cx="10" cy="10" r="8.7" fill="none" stroke="#cdcdcd" stroke-width="1.5"/><path d="M5.2 6.2 H14.8 L11 10.6 V15 H9 V10.6Z" fill="#c4c4c4"/><ellipse cx="10" cy="6.2" rx="4.8" ry="1.3" fill="#d8d8d8" stroke="#c0c0c0" stroke-width=".6"/></svg>
<div style="left:1435px;top:262px;width:1px;height:42.5px;background:#c6c6c6"></div>
<div class="t" style="left:1327.33px;top:276.75px;font-size:14px;color:#2b2b2b;letter-spacing:-0.549px;">Ndị mmadụ</div>
<svg style="left:1404.2px;top:273.2px" width="20" height="20" viewBox="0 0 20 20"><circle cx="10" cy="10" r="8.7" fill="none" stroke="#cdcdcd" stroke-width="1.5"/><path d="M5.2 6.2 H14.8 L11 10.6 V15 H9 V10.6Z" fill="#c4c4c4"/><ellipse cx="10" cy="6.2" rx="4.8" ry="1.3" fill="#d8d8d8" stroke="#c0c0c0" stroke-width=".6"/></svg>
<div style="left:1560px;top:262px;width:1px;height:42.5px;background:#c6c6c6"></div>
<div class="t" style="left:1436.03px;top:276.75px;font-size:14px;color:#2b2b2b;letter-spacing:-0.024px;">Tgwọ</div>
<svg style="left:1529.2px;top:273.2px" width="20" height="20" viewBox="0 0 20 20"><circle cx="10" cy="10" r="8.7" fill="none" stroke="#cdcdcd" stroke-width="1.5"/><path d="M5.2 6.2 H14.8 L11 10.6 V15 H9 V10.6Z" fill="#c4c4c4"/><ellipse cx="10" cy="6.2" rx="4.8" ry="1.3" fill="#d8d8d8" stroke="#c0c0c0" stroke-width=".6"/></svg>
<div style="left:368px;top:304px;width:12.5px;height:219px;background:#f5f5f5"></div>
<div style="left:381px;top:304px;width:1178.5px;height:44px;background:#d9f0fe"></div>
<div style="left:368px;top:347px;width:1191.5px;height:1px;background:#bec7cb"></div>
<div class="t" style="left:416.03px;top:319.15px;font-size:14px;color:#222;letter-spacing:-0.093px;">Nọ n'ọrụ</div>
<div class="t" style="left:531.53px;top:319.15px;font-size:14px;color:#222;letter-spacing:-0.338px;">1000001</div>
<div class="t" style="left:636.03px;top:319.15px;font-size:14px;color:#222;letter-spacing:-0.509px;">Mmadụ</div>
<div class="t" style="left:798.73px;top:319.15px;font-size:14px;color:#222;letter-spacing:-0.114px;">Onye ahịa 1</div>
<div class="t" style="left:937.43px;top:319.15px;font-size:14px;color:#222;letter-spacing:-0.192px;">Okporo ụzọ 1</div>
<div class="t" style="left:1074.20px;top:319.15px;font-size:14px;color:#222;letter-spacing:-0.45px;">1</div>
<div class="t" style="left:1195.50px;top:319.15px;font-size:14px;color:#222;letter-spacing:-0.45px;">1</div>
<div class="t" style="right:160.50px;top:319.15px;font-size:14px;color:#222;letter-spacing:-0.45px;">3</div>
<div class="t" style="right:36.43px;top:319.15px;font-size:14px;color:#222;letter-spacing:0.02px;">980.00</div>
<div style="left:381px;top:348px;width:1178.5px;height:44px;background:#dffae3"></div>
<div style="left:368px;top:391px;width:1191.5px;height:1px;background:#bec7cb"></div>
<div class="t" style="left:416.03px;top:362.65px;font-size:14px;color:#222;letter-spacing:-0.093px;">Nọ n'ọrụ</div>
<div class="t" style="left:531.53px;top:362.65px;font-size:14px;color:#222;letter-spacing:-0.338px;">1000002</div>
<div class="t" style="left:636.03px;top:362.65px;font-size:14px;color:#222;letter-spacing:-0.509px;">Mmadụ</div>
<div class="t" style="left:798.73px;top:362.65px;font-size:14px;color:#222;letter-spacing:-0.01px;">Ahịa 2</div>
<div class="t" style="left:937.43px;top:362.65px;font-size:14px;color:#222;letter-spacing:-0.192px;">Okporo ụzọ 1</div>
<div class="t" style="left:1074.20px;top:362.65px;font-size:14px;color:#222;letter-spacing:-0.45px;">1</div>
<div class="t" style="left:1195.50px;top:362.65px;font-size:14px;color:#222;letter-spacing:-0.45px;">2</div>
<div class="t" style="right:160.50px;top:362.65px;font-size:14px;color:#222;letter-spacing:-0.45px;">2</div>
<div class="t" style="right:36.43px;top:362.65px;font-size:14px;color:#222;letter-spacing:0.02px;">586.00</div>
<div style="left:381px;top:392px;width:1178.5px;height:44px;background:#d9f0fe"></div>
<div style="left:368px;top:435px;width:1191.5px;height:1px;background:#bec7cb"></div>
<svg style="left:402.9px;top:403.2px" width="20" height="20" viewBox="0 0 20 20"><defs><linearGradient id="g67" x1="0" y1="0" x2="0" y2="1"><stop offset="0" stop-color="#7c8a98"/><stop offset="1" stop-color="#b4bec8"/></linearGradient></defs><circle cx="10" cy="10" r="8.2" fill="#fdfdfe" stroke="url(#g67)" stroke-width="2"/><path d="M10 9.6 L13 6.8 M10 9.6 L7 7.4" stroke="#8a94a0" stroke-width="1.2" fill="none"/></svg>
<div class="t" style="left:437.53px;top:406.65px;font-size:14px;color:#b9c4cc;letter-spacing:-0.149px;">Archive</div>
<div class="t" style="left:531.53px;top:406.65px;font-size:14px;color:#b9c4cc;letter-spacing:-0.338px;">1000003</div>
<div class="t" style="left:636.03px;top:406.65px;font-size:14px;color:#b9c4cc;letter-spacing:-0.509px;">Mmadụ</div>
<div class="t" style="left:798.73px;top:406.65px;font-size:14px;color:#b9c4cc;letter-spacing:-0.27px;">Ndị ahịa 3</div>
<div class="t" style="left:937.43px;top:406.65px;font-size:14px;color:#b9c4cc;letter-spacing:-0.192px;">Okporo ụzọ 1</div>
<div class="t" style="left:1074.20px;top:406.65px;font-size:14px;color:#b9c4cc;letter-spacing:-0.45px;">2</div>
<div class="t" style="right:160.50px;top:406.65px;font-size:14px;color:#b9c4cc;letter-spacing:-0.45px;">4</div>
<div class="t" style="right:36.43px;top:406.65px;font-size:14px;color:#b9c4cc;letter-spacing:0.323px;">0.00</div>
<div style="left:381px;top:436px;width:1178.5px;height:44px;background:#dffae3"></div>
<div style="left:368px;top:479px;width:1191.5px;height:1px;background:#bec7cb"></div>
<div class="t" style="left:416.03px;top:450.55px;font-size:14px;color:#222;letter-spacing:-0.093px;">Nọ n'ọrụ</div>
<div class="t" style="left:531.53px;top:450.55px;font-size:14px;color:#222;letter-spacing:-0.338px;">1000004</div>
<div class="t" style="left:636.03px;top:450.55px;font-size:14px;color:#222;letter-spacing:-0.509px;">Mmadụ</div>
<div class="t" style="left:798.73px;top:450.55px;font-size:14px;color:#222;letter-spacing:-0.01px;">Ahịa 4</div>
<div class="t" style="left:937.43px;top:450.55px;font-size:14px;color:#222;letter-spacing:-0.043px;">Okporo 2</div>
<div class="t" style="left:1074.20px;top:450.55px;font-size:14px;color:#222;letter-spacing:-0.45px;">3</div>
<div class="t" style="left:1195.50px;top:450.55px;font-size:14px;color:#222;letter-spacing:-0.45px;">1</div>
<div class="t" style="right:160.50px;top:450.55px;font-size:14px;color:#222;letter-spacing:-0.45px;">3</div>
<div class="t" style="right:36.43px;top:450.55px;font-size:14px;color:#222;letter-spacing:0.079px;">-514.00</div>
<div style="left:381px;top:480px;width:1178.5px;height:43px;background:#d9f0fe"></div>
<div style="left:368px;top:522px;width:1191.5px;height:1px;background:#bec7cb"></div>
<div class="t" style="left:416.03px;top:494.45px;font-size:14px;color:#222;letter-spacing:-0.093px;">Nọ n'ọrụ</div>
<div class="t" style="left:531.53px;top:494.45px;font-size:14px;color:#222;letter-spacing:-0.338px;">2000001</div>
<div class="t" style="left:636.03px;top:494.45px;font-size:14px;color:#222;letter-spacing:-0.291px;">Nhazi</div>
<div class="t" style="left:798.73px;top:494.45px;font-size:14px;color:#222;letter-spacing:-0.285px;">Companylọ ọrụ</div>
<div class="t" style="left:937.43px;top:494.45px;font-size:14px;color:#222;letter-spacing:-0.043px;">Okporo 2</div>
<div class="t" style="left:1073.43px;top:494.45px;font-size:14px;color:#222;letter-spacing:-0.106px;">100</div>
<div class="t" style="right:160.50px;top:494.45px;font-size:14px;color:#222;letter-spacing:-0.45px;">0</div>
<div class="t" style="right:36.43px;top:494.45px;font-size:14px;color:#222;letter-spacing:0.079px;">-679.00</div>
<div style="left:368px;top:304px;width:1191.5px;height:1px;background:#c6c6c6"></div>
<div style="left:1559px;top:304px;width:1px;height:219px;background:#c6c6c6"></div>
<div style="left:381px;top:305px;width:1177px;height:41px;border:1px dotted #333;box-sizing:content-box"></div>
<svg style="left:371px;top:321px" width="6" height="10" viewBox="0 0 6 10"><path d="M0.5 0.5 L5 5 L0.5 9.5Z" fill="#444"/></svg>
<div style="left:367px;top:562px;width:1193px;height:44px;background:#f5f5f5;border-top:1px solid #c6c6c6;border-right:1px solid #c6c6c6"></div>
<div style="left:367px;top:606px;width:1204px;height:2px;background:#c2c2c2"></div>
<div style="left:1329px;top:565px;width:104px;height:39px;background:#fff;border:1px solid #c6c6c6;box-sizing:border-box"></div>
<div style="left:1438px;top:565px;width:119px;height:39px;background:#fff;border:1px solid #c6c6c6;box-sizing:border-box"></div>
<div class="t" style="right:167.33px;top:577.85px;font-size:14px;color:#2b2b2b;letter-spacing:-0.216px;">12</div>
<div class="t" style="right:44.03px;top:577.85px;font-size:14px;color:#2b2b2b;letter-spacing:0.02px;">373.00</div>
<div style="left:366px;top:610.5px;width:1204px;height:35px;border:1px solid #c6c6c6;background:#fff;box-sizing:border-box"></div>
<svg style="left:373px;top:617px" width="22" height="22" viewBox="0 0 22 22"><defs><radialGradient id="g68" cx="0.4" cy="0.35" r="0.7"><stop offset="0" stop-color="#eaf4ff"/><stop offset="1" stop-color="#9cc6f2"/></radialGradient></defs><path d="M13.5 13.5 L20 20" stroke="#d88a48" stroke-width="3.6" stroke-linecap="round"/><circle cx="8.6" cy="8.6" r="6.8" fill="url(#g68)" stroke="#8e9fc0" stroke-width="2"/></svg>
<div class="t" style="left:400.53px;top:618.98px;font-size:19.4px;color:#333;letter-spacing:0.127px;">Pịa ebe a maka edezi. Chọọ maka:</div>
<div class="t" style="left:723.10px;top:617.93px;font-size:23px;color:#333;">×</div>
<svg style="left:754.5px;top:618px" width="20" height="20" viewBox="0 0 20 20"><circle cx="10" cy="10" r="9.6" fill="#f03a3a"/><path d="M4.6 10 H14.4 M10.6 5.8 L14.8 10 L10.6 14.2" stroke="#fff" stroke-width="2.4" fill="none"/></svg>
<div class="t" style="left:781.63px;top:618.98px;font-size:19.4px;color:#333;letter-spacing:0.528px;">Ihe ndekọ niile</div>
<div class="t" style="left:929.90px;top:617.93px;font-size:23px;color:#333;">×</div>
<div style="left:958px;top:651px;width:21px;height:1px;background:repeating-linear-gradient(90deg,#aaa 0 1px,transparent 1px 2.3px)"></div>
<div style="left:366px;top:658px;width:80px;height:46px;background:#fff;border-left:1px solid #c6c6c6;border-right:1px solid #c4c4c4"></div>
<div style="left:366px;top:658px;width:80px;height:2px;background:#1ba1ee"></div>
<div class="t" style="left:405.03px;top:674.95px;font-size:14px;color:#1b95e0;letter-spacing:0.203px;">Ọrụ.</div>
<svg style="left:381.3px;top:671.4px" width="15" height="17.6" viewBox="0 0 16 18"><defs><linearGradient id="g69" x1="0" y1="0" x2="0.3" y2="1"><stop offset="0" stop-color="#b4d6f2"/><stop offset="0.5" stop-color="#7fb2e2"/><stop offset="1" stop-color="#5690cc"/></linearGradient><linearGradient id="g70" x1="0" y1="0" x2="0" y2="1"><stop offset="0" stop-color="#4a5680"/><stop offset="1" stop-color="#1e2544"/></linearGradient></defs><rect x="0.5" y="0.5" width="15" height="17" rx="1.3" fill="url(#g69)" stroke="#39558e" stroke-width="1"/><rect x="3" y="1.2" width="12" height="1.5" fill="#dbe9f8"/><rect x="3" y="2.7" width="12" height="0.8" fill="#6c8fc4"/><rect x="0" y="0" width="3.2" height="18" rx="1" fill="url(#g70)"/></svg>
<div style="left:446px;top:661px;width:88px;height:41px;background:#f5f5f5;border:1px solid #c8c8c8"></div>
<div class="t" style="left:482.33px;top:675.75px;font-size:14px;color:#666;letter-spacing:0.091px;">Nweta</div>
<svg style="left:458.90000000000003px;top:672.6px" width="15" height="17.6" viewBox="0 0 16 18"><defs><linearGradient id="g71" x1="0" y1="0" x2="0.3" y2="1"><stop offset="0" stop-color="#b4d6f2"/><stop offset="0.5" stop-color="#7fb2e2"/><stop offset="1" stop-color="#5690cc"/></linearGradient><linearGradient id="g72" x1="0" y1="0" x2="0" y2="1"><stop offset="0" stop-color="#4a5680"/><stop offset="1" stop-color="#1e2544"/></linearGradient></defs><rect x="0.5" y="0.5" width="15" height="17" rx="1.3" fill="url(#g71)" stroke="#39558e" stroke-width="1"/><rect x="3" y="1.2" width="12" height="1.5" fill="#dbe9f8"/><rect x="3" y="2.7" width="12" height="0.8" fill="#6c8fc4"/><rect x="0" y="0" width="3.2" height="18" rx="1" fill="url(#g72)"/></svg>
<div style="left:534px;top:661px;width:116px;height:41px;background:#f5f5f5;border:1px solid #c8c8c8"></div>
<div class="t" style="left:571.53px;top:675.75px;font-size:14px;color:#666;letter-spacing:-0.092px;">Iwu kwesiri</div>
<svg style="left:547.5px;top:672.6px" width="15" height="17.6" viewBox="0 0 16 18"><defs><linearGradient id="g73" x1="0" y1="0" x2="0.3" y2="1"><stop offset="0" stop-color="#b4d6f2"/><stop offset="0.5" stop-color="#7fb2e2"/><stop offset="1" stop-color="#5690cc"/></linearGradient><linearGradient id="g74" x1="0" y1="0" x2="0" y2="1"><stop offset="0" stop-color="#4a5680"/><stop offset="1" stop-color="#1e2544"/></linearGradient></defs><rect x="0.5" y="0.5" width="15" height="17" rx="1.3" fill="url(#g73)" stroke="#39558e" stroke-width="1"/><rect x="3" y="1.2" width="12" height="1.5" fill="#dbe9f8"/><rect x="3" y="2.7" width="12" height="0.8" fill="#6c8fc4"/><rect x="0" y="0" width="3.2" height="18" rx="1" fill="url(#g74)"/></svg>
<div style="left:650px;top:661px;width:119px;height:41px;background:#f5f5f5;border:1px solid #c8c8c8"></div>
<div class="t" style="left:687.43px;top:675.75px;font-size:14px;color:#666;letter-spacing:-0.147px;">Nkwụ ụgwọ</div>
<svg style="left:663.4px;top:672.6px" width="15" height="17.6" viewBox="0 0 16 18"><defs><linearGradient id="g75" x1="0" y1="0" x2="0.3" y2="1"><stop offset="0" stop-color="#b4d6f2"/><stop offset="0.5" stop-color="#7fb2e2"/><stop offset="1" stop-color="#5690cc"/></linearGradient><linearGradient id="g76" x1="0" y1="0" x2="0" y2="1"><stop offset="0" stop-color="#4a5680"/><stop offset="1" stop-color="#1e2544"/></linearGradient></defs><rect x="0.5" y="0.5" width="15" height="17" rx="1.3" fill="url(#g75)" stroke="#39558e" stroke-width="1"/><rect x="3" y="1.2" width="12" height="1.5" fill="#dbe9f8"/><rect x="3" y="2.7" width="12" height="0.8" fill="#6c8fc4"/><rect x="0" y="0" width="3.2" height="18" rx="1" fill="url(#g76)"/></svg>
<div style="left:769px;top:661px;width:96px;height:41px;background:#f5f5f5;border:1px solid #c8c8c8"></div>
<div class="t" style="left:806.03px;top:675.75px;font-size:14px;color:#666;letter-spacing:-0.349px;">Nguzozi</div>
<svg style="left:782.8000000000001px;top:672.6px" width="15" height="17.6" viewBox="0 0 16 18"><defs><linearGradient id="g77" x1="0" y1="0" x2="0.3" y2="1"><stop offset="0" stop-color="#b4d6f2"/><stop offset="0.5" stop-color="#7fb2e2"/><stop offset="1" stop-color="#5690cc"/></linearGradient><linearGradient id="g78" x1="0" y1="0" x2="0" y2="1"><stop offset="0" stop-color="#4a5680"/><stop offset="1" stop-color="#1e2544"/></linearGradient></defs><rect x="0.5" y="0.5" width="15" height="17" rx="1.3" fill="url(#g77)" stroke="#39558e" stroke-width="1"/><rect x="3" y="1.2" width="12" height="1.5" fill="#dbe9f8"/><rect x="3" y="2.7" width="12" height="0.8" fill="#6c8fc4"/><rect x="0" y="0" width="3.2" height="18" rx="1" fill="url(#g78)"/></svg>
<div style="left:446px;top:702px;width:1125px;height:1px;background:#c6c6c6"></div>
<div style="left:366px;top:703px;width:2px;height:171px;background:#cccccc"></div>
<div style="left:1571px;top:702px;width:1px;height:172px;background:#c6c6c6"></div>
<div style="left:366px;top:873px;width:1206px;height:3px;background:#c4c4c4"></div>
<div style="left:369px;top:704px;width:1199px;height:2px;background:#c2c2c2"></div>
<div style="left:369px;top:704px;width:2px;height:167px;background:#dcdcdc"></div>
<div style="left:1568px;top:704px;width:1px;height:167px;background:#c6c6c6"></div>
<div style="left:369px;top:870px;width:1200px;height:2px;background:#c8c8c8"></div>
<div style="left:370px;top:706px;width:1180px;height:42px;background:#f5f5f5"></div>
<div style="left:383px;top:706px;width:1px;height:86px;background:#c6c6c6"></div>
<div style="left:1549.5px;top:706px;width:1px;height:42px;background:#c6c6c6"></div>
<div class="t" style="left:384.93px;top:720.45px;font-size:14px;color:#2b2b2b;letter-spacing:0.207px;">Otu ọrụ</div>
<svg style="left:1519.4px;top:717.2px" width="20" height="20" viewBox="0 0 20 20"><circle cx="10" cy="10" r="8.7" fill="none" stroke="#cdcdcd" stroke-width="1.5"/><path d="M5.2 6.2 H14.8 L11 10.6 V15 H9 V10.6Z" fill="#c4c4c4"/><ellipse cx="10" cy="6.2" rx="4.8" ry="1.3" fill="#d8d8d8" stroke="#c0c0c0" stroke-width=".6"/></svg>
<div style="left:370px;top:748px;width:1180px;height:1px;background:#c6c6c6"></div>
<div style="left:370px;top:749px;width:13px;height:43px;background:#f5f5f5"></div>
<div style="left:384px;top:749px;width:1166px;height:43px;background:#d9f0fe"></div>
<div style="left:370px;top:792px;width:1180px;height:1px;background:#bec7cb"></div>
<div style="left:1549.5px;top:748px;width:1px;height:45px;background:#c6c6c6"></div>
<svg style="left:374px;top:766px" width="6" height="10" viewBox="0 0 6 10"><path d="M0.5 0.5 L5 5 L0.5 9.5Z" fill="#444"/></svg>
<div class="t" style="left:418.23px;top:763.15px;font-size:14px;color:#2b2b2b;letter-spacing:-0.351px;">Mmiri mmiri na ngwaọrụ metering</div>
<div style="left:370px;top:833px;width:1180px;height:38px;background:#f5f5f5;border-top:1px solid #c6c6c6;border-right:1px solid #c6c6c6"></div>
</body></html>
